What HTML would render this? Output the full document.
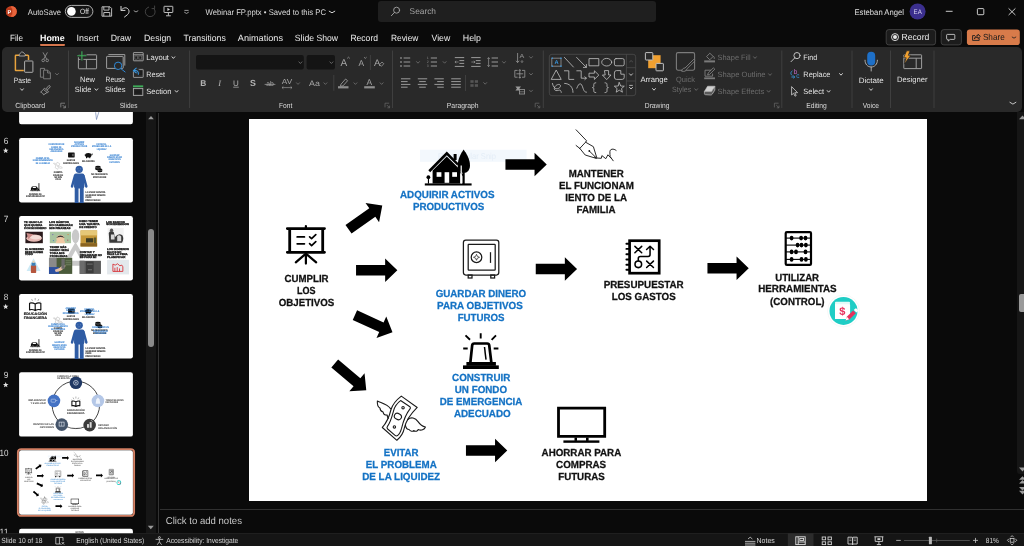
<!DOCTYPE html>
<html lang="en">
<head>
<meta charset="utf-8">
<title>Webinar FP.pptx - PowerPoint</title>
<style>
html,body{margin:0;padding:0;background:#0a0a0a;}
body{width:1024px;height:546px;overflow:hidden;position:relative;font-family:"Liberation Sans", sans-serif;}
.blk{position:absolute;}
#titlebar{left:0;top:0;width:1024px;height:47px;background:#0a0a0a;}
#search{left:378px;top:1px;width:278px;height:21px;background:#1f1f1f;border-radius:3px;}
#ribbon{left:1.5px;top:47px;width:1020px;height:64.5px;background:#292929;border-radius:5px;}
#panel{left:0;top:112px;width:158px;height:421px;background:#0a0a0a;}
#pscroll{left:146px;top:112px;width:10px;height:421px;background:#161616;}
#pthumb{left:148.3px;top:229px;width:5.4px;height:117.5px;background:#8a8a8a;border-radius:3px;}
#pdiv{left:158.3px;top:113px;width:1px;height:420px;background:#333;}
#work{left:159px;top:112px;width:865px;height:397px;background:#0a0a0a;}
#slide{left:249.4px;top:119.25px;width:677.6px;height:381.75px;background:#fff;}
#notesdiv{left:159.5px;top:509px;width:864.5px;height:1px;background:#303030;}
#statusbar{left:0;top:533px;width:1024px;height:13px;background:#151515;border-top:1px solid #1f1f1f;box-sizing:border-box;}
#vscroll{left:1016.7px;top:112px;width:8px;height:362px;background:#161616;border-radius:0 0 0 3px;}
#vthumb{left:1019px;top:293.5px;width:8px;height:18.5px;background:#9a9a9a;border-radius:2px;}
svg#ov{position:absolute;left:0;top:0;width:1024px;height:546px;font-family:"Liberation Sans", sans-serif;will-change:transform;}
svg text{white-space:pre;text-rendering:geometricPrecision;}
</style>
</head>
<body>
<div class="blk" id="titlebar"></div>
<div class="blk" id="search"></div>
<div class="blk" id="ribbon"></div>
<div class="blk" id="panel"></div>
<div class="blk" id="pscroll"></div>
<div class="blk" id="pthumb"></div>
<div class="blk" id="pdiv"></div>
<div class="blk" id="work"></div>
<div class="blk" id="vscroll"></div>
<div class="blk" id="vthumb"></div>
<div class="blk" id="slide"></div>
<div class="blk" id="notesdiv"></div>
<div class="blk" id="statusbar"></div>
<svg id="ov" width="1024" height="546" viewBox="0 0 1024 546">
<circle cx="11.3" cy="11.5" r="5.5" fill="#c8421f"/>
<path d="M11.3 6a5.5 5.5 0 0 1 0 11z" fill="#e8643c"/>
<rect x="6.3" y="8.3" width="6" height="6.4" fill="#b7391a" rx="0.8"/>
<text x="9.3" y="13.56" font-size="5.6" fill="#fff" text-anchor="middle" font-weight="700">P</text>
<text x="27.8" y="14.79" font-size="8.2" fill="#dcdcdc" textLength="33.2" lengthAdjust="spacingAndGlyphs">AutoSave</text>
<rect x="65.3" y="5.4" width="27.6" height="12" fill="#141414" stroke="#bdbdbd" stroke-width="0.9" rx="6"/>
<circle cx="71.4" cy="11.4" r="4.3" fill="#fff"/>
<text x="80" y="14.38" font-size="7.6" fill="#e4e4e4" textLength="8.8" lengthAdjust="spacingAndGlyphs">Off</text>
<g fill="none" stroke="#cfcfcf" stroke-width="0.9" stroke-linejoin="round"><path d="M102 6.8h8l1.6 1.6v7.8h-9.6z"/><path d="M103.8 6.9v3.2h5.2V6.9"/><path d="M103.8 16.1v-3.6h6v3.6"/></g>
<g fill="none" stroke="#d8d8d8" stroke-width="1" stroke-linecap="round" stroke-linejoin="round"><path d="M121 6.4v4h4"/><path d="M121.3 10.2c1.6-2.4 4.4-3.2 6.4-1.6c2 1.8 1.6 4.6-0.4 6.2l-2.8 2.2"/></g>
<path d="M134.1 10.85 l1.9 1.1 l1.9 -1.1" fill="none" stroke="#bdbdbd" stroke-width="0.8" stroke-linecap="round" stroke-linejoin="round"/>
<path d="M153.6 8.2a4.9 4.9 0 1 1 -4.6-1.2" fill="none" stroke="#4a4a4a" stroke-width="0.9"/><path d="M154.6 5.6v3h-3" fill="none" stroke="#4a4a4a" stroke-width="0.9"/>
<g fill="none" stroke="#d0d0d0" stroke-width="0.9"><rect x="164" y="6.3" width="8.8" height="6.2" rx="0.4"/><path d="M168.4 12.6v3M166 15.8h4.8"/></g><path d="M167.4 7.8l2.6 1.6l-2.6 1.6z" fill="#d0d0d0"/>
<line x1="184.4" y1="10.4" x2="188.6" y2="10.4" stroke="#bdbdbd" stroke-width="0.8" stroke-linecap="butt"/>
<path d="M184.6 12.35 l1.9 1.1 l1.9 -1.1" fill="none" stroke="#bdbdbd" stroke-width="0.8" stroke-linecap="round" stroke-linejoin="round"/>
<text x="205.5" y="14.79" font-size="8.2" fill="#dcdcdc" textLength="120.5" lengthAdjust="spacingAndGlyphs">Webinar FP.pptx • Saved to this PC</text>
<path d="M329.2 11.2 l2.8 1.6 l2.8 -1.6" fill="none" stroke="#d4d4d4" stroke-width="1.0" stroke-linecap="round" stroke-linejoin="round"/>
<g fill="none" stroke="#a8a8a8" stroke-width="0.9" stroke-linecap="round"><circle cx="396.6" cy="10.2" r="3"/><path d="M394.4 12.5l-3 3.2"/></g>
<text x="409.6" y="14.26" font-size="8.4" fill="#a2a2a2" textLength="26.4" lengthAdjust="spacingAndGlyphs">Search</text>
<text x="854.5" y="14.79" font-size="8.2" fill="#e0e0e0" textLength="49.5" lengthAdjust="spacingAndGlyphs">Esteban Angel</text>
<circle cx="917.6" cy="11.5" r="8" fill="#3b2f8e"/>
<text x="913.6" y="14" font-size="6.4" fill="#d9d4f0" textLength="8.2" lengthAdjust="spacingAndGlyphs">EA</text>
<line x1="945.8" y1="11.3" x2="952.6" y2="11.3" stroke="#e0e0e0" stroke-width="0.9" stroke-linecap="butt"/>
<rect x="977.4" y="8.6" width="6.4" height="6.1" fill="none" stroke="#e0e0e0" stroke-width="0.9" rx="0.8"/>
<path d="M1008.6 8.4l6.8 6.6M1015.4 8.4l-6.8 6.6" stroke="#e0e0e0" stroke-width="0.9" fill="none"/>
<text x="10" y="40.87" font-size="9" fill="#ececec" textLength="13.1" lengthAdjust="spacingAndGlyphs">File</text>
<text x="76.5" y="40.87" font-size="9" fill="#ececec" textLength="22.3" lengthAdjust="spacingAndGlyphs">Insert</text>
<text x="110.8" y="40.87" font-size="9" fill="#ececec" textLength="20.4" lengthAdjust="spacingAndGlyphs">Draw</text>
<text x="144" y="40.87" font-size="9" fill="#ececec" textLength="27.2" lengthAdjust="spacingAndGlyphs">Design</text>
<text x="183.6" y="40.87" font-size="9" fill="#ececec" textLength="42.2" lengthAdjust="spacingAndGlyphs">Transitions</text>
<text x="237.8" y="40.87" font-size="9" fill="#ececec" textLength="45.2" lengthAdjust="spacingAndGlyphs">Animations</text>
<text x="294.8" y="40.87" font-size="9" fill="#ececec" textLength="43.2" lengthAdjust="spacingAndGlyphs">Slide Show</text>
<text x="350.4" y="40.87" font-size="9" fill="#ececec" textLength="27.6" lengthAdjust="spacingAndGlyphs">Record</text>
<text x="391" y="40.87" font-size="9" fill="#ececec" textLength="27.4" lengthAdjust="spacingAndGlyphs">Review</text>
<text x="431.5" y="40.87" font-size="9" fill="#ececec" textLength="18.7" lengthAdjust="spacingAndGlyphs">View</text>
<text x="462.8" y="40.87" font-size="9" fill="#ececec" textLength="18.2" lengthAdjust="spacingAndGlyphs">Help</text>
<text x="40" y="40.87" font-size="9" fill="#ffffff" textLength="24.6" lengthAdjust="spacingAndGlyphs" font-weight="700">Home</text>
<rect x="40" y="43.9" width="25" height="2" fill="#d5764d" rx="0.8"/>
<rect x="886.2" y="29.6" width="49.4" height="15.3" fill="#1c1c1c" stroke="#4a4a4a" stroke-width="0.8" rx="2.6"/>
<circle cx="895" cy="37.1" r="3.5" fill="none" stroke="#e6e6e6" stroke-width="0.9"/>
<circle cx="895" cy="37.1" r="2" fill="#e6e6e6"/>
<text x="901.6" y="40.3" font-size="8.8" fill="#ececec" textLength="27.7" lengthAdjust="spacingAndGlyphs">Record</text>
<rect x="941.2" y="29.6" width="20.2" height="15.3" fill="#1c1c1c" stroke="#4a4a4a" stroke-width="0.8" rx="2.6"/>
<path d="M947.4 34.4h6.6a0.8 0.8 0 0 1 0.8 0.8v3.4a0.8 0.8 0 0 1 -0.8 0.8h-3.8l-2 1.7v-1.7h-0.8a0.8 0.8 0 0 1 -0.8-0.8v-3.4a0.8 0.8 0 0 1 0.8-0.8z" fill="none" stroke="#dcdcdc" stroke-width="0.8" stroke-linejoin="round"/>
<rect x="966.9" y="29.4" width="52.9" height="15.6" fill="#d87b4a" rx="2.8"/>
<g fill="none" stroke="#1d1d1d" stroke-width="0.9" stroke-linejoin="round" stroke-linecap="round"><path d="M974.6 35.6h-2v4.8h6.6v-1.8"/><path d="M974.6 38.4c0.4-1.8 1.6-2.8 3.4-2.8v-1.4l2.4 2.2l-2.4 2.2v-1.4c-1.4 0-2.6 0.3-3.4 1.2z"/></g>
<text x="982.9" y="40.3" font-size="8.8" fill="#1a1a1a" textLength="21.9" lengthAdjust="spacingAndGlyphs">Share</text>
<path d="M1012.2 37.05 l1.8 1.1 l1.8 -1.1" fill="none" stroke="#1d1d1d" stroke-width="0.8" stroke-linecap="round" stroke-linejoin="round"/>
<line x1="68.5" y1="50.5" x2="68.5" y2="108" stroke="#454545" stroke-width="0.8" stroke-linecap="butt"/>
<line x1="189.6" y1="50.5" x2="189.6" y2="108" stroke="#454545" stroke-width="0.8" stroke-linecap="butt"/>
<line x1="392.5" y1="50.5" x2="392.5" y2="108" stroke="#454545" stroke-width="0.8" stroke-linecap="butt"/>
<line x1="543.3" y1="50.5" x2="543.3" y2="108" stroke="#454545" stroke-width="0.8" stroke-linecap="butt"/>
<line x1="781.8" y1="50.5" x2="781.8" y2="108" stroke="#454545" stroke-width="0.8" stroke-linecap="butt"/>
<line x1="852" y1="50.5" x2="852" y2="108" stroke="#454545" stroke-width="0.8" stroke-linecap="butt"/>
<line x1="890.5" y1="50.5" x2="890.5" y2="108" stroke="#454545" stroke-width="0.8" stroke-linecap="butt"/>
<line x1="934" y1="50.5" x2="934" y2="108" stroke="#454545" stroke-width="0.8" stroke-linecap="butt"/>
<g fill="none" stroke-linejoin="round"><path d="M19.6 55.3H16a0.6 0.6 0 0 0 -0.6 0.6V70a0.6 0.6 0 0 0 0.6 0.6h7.8" stroke="#e8a33d" stroke-width="1.5"/><path d="M25 55.3h2.9a0.6 0.6 0 0 1 0.6 0.6v4.2" stroke="#e8a33d" stroke-width="1.5"/><path d="M19.2 56v-1.6l2.4-2.4h1.2l2.4 2.4V56z" stroke="#bdbdbd" stroke-width="0.8" fill="#292929"/><rect x="24.6" y="61" width="8.3" height="11.3" rx="0.6" stroke="#bdbdbd" stroke-width="0.9" fill="#292929"/></g>
<text x="13.8" y="82.59" font-size="7.7" fill="#e4e4e4" textLength="17.2" lengthAdjust="spacingAndGlyphs">Paste</text>
<path d="M20.6 88.8 l1.4 1.6 l1.4 -1.6" fill="none" stroke="#d4d4d4" stroke-width="1.0" stroke-linecap="round" stroke-linejoin="round"/>
<g fill="none" stroke="#9a9a9a" stroke-width="0.8"><path d="M43 52.4l3.6 6.6M47.4 52.4l-3.6 6.6"/><circle cx="43.2" cy="60.4" r="1.3"/><circle cx="47.2" cy="60.4" r="1.3"/></g>
<g fill="none" stroke="#8c8c8c" stroke-width="0.8" stroke-linejoin="round"><path d="M44.6 70v-1.6h-4.2v8.8h2.6"/><path d="M43.6 70.2h4.2l2.6 2.6v6h-6.8z"/><path d="M47.6 70.4v2.6h2.6"/></g>
<path d="M55.5 73.4 l1.5 1.6 l1.5 -1.6" fill="none" stroke="#6c6c6c" stroke-width="0.9" stroke-linecap="round" stroke-linejoin="round"/>
<g fill="none" stroke="#a8a8a8" stroke-width="0.8" stroke-linejoin="round"><path d="M46.4 88.4l2.6-3l1.4 1.2l-2.6 3z"/><path d="M44.4 88.2l4.2 3.4l-1 1.2l-4.2-3.4z"/><path d="M43.2 89.6l-2.6 2.6c1.6 0.4 2.4 1.2 3 2.6l3.6-2.4"/></g>
<text x="15.2" y="108.39" font-size="7.4" fill="#dadada" textLength="30" lengthAdjust="spacingAndGlyphs">Clipboard</text>
<path d="M65 103.2h-4.200v4.200M62.6 105l2.600 2.600M65.4 107.8v-2.200M65.4 107.8h-2.200" fill="none" stroke="#9a9a9a" stroke-width="0.700"/>
<g fill="none" stroke="#9e9e9e" stroke-width="1"><rect x="78.4" y="54.8" width="18.2" height="14" rx="0.5"/><path d="M78.4 59.4H96.6M86.4 59.4V68.8"/></g><path d="M81.9 51v9.6M77.1 55.8h9.6" stroke="#292929" stroke-width="3" fill="none"/><path d="M81.9 51.2v9.2M77.3 55.8h9.2" stroke="#3fae5a" stroke-width="1.1" fill="none"/>
<text x="80" y="81.59" font-size="7.7" fill="#e4e4e4" textLength="15" lengthAdjust="spacingAndGlyphs">New</text>
<text x="74.8" y="91.99" font-size="7.7" fill="#e4e4e4" textLength="16.6" lengthAdjust="spacingAndGlyphs">Slide</text>
<path d="M95 88.8 l1.4 1.6 l1.4 -1.6" fill="none" stroke="#d4d4d4" stroke-width="1.0" stroke-linecap="round" stroke-linejoin="round"/>
<g fill="none" stroke="#9e9e9e" stroke-width="1"><path d="M108.4 54.6h16.4v11"/><rect x="106.6" y="56.4" width="16.6" height="12" rx="0.5" fill="#292929"/></g><g fill="none" stroke="#2f8ad8" stroke-width="1"><circle cx="118.1" cy="65.8" r="3.7" fill="#292929"/><path d="M120.8 68.6l4.6 3.6"/></g>
<text x="105.6" y="81.59" font-size="7.7" fill="#e4e4e4" textLength="19.4" lengthAdjust="spacingAndGlyphs">Reuse</text>
<text x="105" y="91.99" font-size="7.7" fill="#e4e4e4" textLength="20.6" lengthAdjust="spacingAndGlyphs">Slides</text>
<g fill="none" stroke="#a8a8a8" stroke-width="0.9"><rect x="133.4" y="52.6" width="9.8" height="8.2" rx="0.4"/><path d="M133.4 54.8h9.8"/></g><rect x="134.9" y="56" width="2.7" height="3.1" fill="#1c1c1c" stroke="#8c8c8c" stroke-width="0.5"/><rect x="138.9" y="56" width="2.9" height="3.100" fill="#1c1c1c" stroke="#8c8c8c" stroke-width="0.500"/>
<text x="146.2" y="59.99" font-size="7.7" fill="#e4e4e4" textLength="22.8" lengthAdjust="spacingAndGlyphs">Layout</text>
<path d="M172 56.8 l1.4 1.6 l1.4 -1.6" fill="none" stroke="#d4d4d4" stroke-width="1.0" stroke-linecap="round" stroke-linejoin="round"/>
<g fill="none" stroke="#a0a0a0" stroke-width="0.9"><rect x="133.4" y="69.4" width="9.800" height="8" rx="0.400"/></g><rect x="138.6" y="71" width="3.600" height="4" fill="#1c1c1c"/><path d="M132.600 70.800l3-2.800v1.600c2.600 0 3.600 1.600 3.400 4.400" stroke="#292929" stroke-width="2.600" fill="none"/><path d="M136.200 68.200l-2.800 2.500l2.800 2.100M133.800 70.700c3.200-0.800 4.800 0.600 4.600 3.600" stroke="#3a96dd" stroke-width="1.100" fill="none" stroke-linejoin="round" stroke-linecap="round"/>
<text x="146.2" y="76.99" font-size="7.7" fill="#e4e4e4" textLength="18.8" lengthAdjust="spacingAndGlyphs">Reset</text>
<rect x="133" y="85.4" width="10.2" height="1.8" fill="#3fae5a"/>
<rect x="133.4" y="88.4" width="9.4" height="7" fill="none" stroke="#a8a8a8" stroke-width="0.9"/><rect x="134.800" y="90.200" width="6.600" height="3.600" fill="#1c1c1c"/>
<text x="146.2" y="93.69" font-size="7.7" fill="#e4e4e4" textLength="25.3" lengthAdjust="spacingAndGlyphs">Section</text>
<path d="M175.2 90.6 l1.4 1.6 l1.4 -1.6" fill="none" stroke="#d4d4d4" stroke-width="1.0" stroke-linecap="round" stroke-linejoin="round"/>
<text x="119.8" y="108.39" font-size="7.4" fill="#dadada" textLength="17.6" lengthAdjust="spacingAndGlyphs">Slides</text>
<rect x="196" y="55" width="107.8" height="14.5" fill="#141414" rx="2"/>
<rect x="306.6" y="55" width="28.4" height="14.5" fill="#141414" rx="2"/>
<path d="M298.9 61.9 l1.5 1.6 l1.5 -1.6" fill="none" stroke="#6c6c6c" stroke-width="0.9" stroke-linecap="round" stroke-linejoin="round"/>
<path d="M329.9 61.9 l1.5 1.6 l1.5 -1.6" fill="none" stroke="#6c6c6c" stroke-width="0.9" stroke-linecap="round" stroke-linejoin="round"/>
<text x="343.8" y="65.7" font-size="10" fill="#a6a6a6" text-anchor="middle">A</text>
<path d="M347.2 58.4l1.3-1.2l1.3 1.2" stroke="#a6a6a6" stroke-width="0.7" fill="none"/>
<text x="361.2" y="65.74" font-size="8.4" fill="#a6a6a6" text-anchor="middle">A</text>
<path d="M364 57.2l1.3 1.2l1.3-1.2" stroke="#a6a6a6" stroke-width="0.7" fill="none"/>
<line x1="370.4" y1="55" x2="370.4" y2="70" stroke="#454545" stroke-width="0.8" stroke-linecap="butt"/>
<text x="377.2" y="65.56" font-size="9.6" fill="#a6a6a6" text-anchor="middle">A</text>
<path d="M379.6 64.6l2.4-2.6l1.8 1.7l-2.4 2.6z" fill="#292929" stroke="#a6a6a6" stroke-width="0.7"/>
<text x="203.2" y="85.94" font-size="8.4" fill="#b4b4b4" text-anchor="middle" font-weight="700">B</text>
<text x="218.2" y="85.9" font-size="8.4" fill="#b4b4b4" font-style="italic" font-family="Liberation Serif, serif">I</text>
<text x="236" y="85.6" font-size="8" fill="#b4b4b4" text-anchor="middle">U</text>
<line x1="233.2" y1="87.2" x2="238.8" y2="87.2" stroke="#b4b4b4" stroke-width="0.7" stroke-linecap="butt"/>
<text x="253" y="86.08" font-size="8.8" fill="#b4b4b4" text-anchor="middle" font-weight="700">S</text>
<text x="270" y="85.98" font-size="6.8" fill="#a6a6a6" text-anchor="middle">ab</text>
<line x1="264.6" y1="84.4" x2="275.4" y2="84.4" stroke="#a6a6a6" stroke-width="0.7" stroke-linecap="butt"/>
<text x="281.8" y="84.19" font-size="7.4" fill="#a6a6a6" textLength="10.4" lengthAdjust="spacingAndGlyphs">AV</text>
<path d="M282 87.6h10M283.4 86.4l-1.4 1.2l1.4 1.2M290.6 86.4l1.4 1.2l-1.4 1.2" stroke="#a6a6a6" stroke-width="0.6" fill="none"/>
<path d="M296.5 82.8 l1.5 1.6 l1.5 -1.6" fill="none" stroke="#6c6c6c" stroke-width="0.9" stroke-linecap="round" stroke-linejoin="round"/>
<text x="309" y="86.2" font-size="8" fill="#a6a6a6" textLength="10.8" lengthAdjust="spacingAndGlyphs">Aa</text>
<path d="M323.9 82.8 l1.5 1.6 l1.5 -1.6" fill="none" stroke="#6c6c6c" stroke-width="0.9" stroke-linecap="round" stroke-linejoin="round"/>
<line x1="333.8" y1="75" x2="333.8" y2="90.8" stroke="#454545" stroke-width="0.8" stroke-linecap="butt"/>
<path d="M341 84.2l4.6-5.2l2 1.7l-4.6 5.2l-2.6 0.4z" fill="none" stroke="#a6a6a6" stroke-width="0.8" stroke-linejoin="round"/>
<rect x="338" y="86.2" width="10.5" height="2.2" fill="#8e8e8e"/>
<path d="M353.9 82.8 l1.5 1.6 l1.5 -1.6" fill="none" stroke="#6c6c6c" stroke-width="0.9" stroke-linecap="round" stroke-linejoin="round"/>
<text x="369.4" y="84.74" font-size="8.4" fill="#a6a6a6" text-anchor="middle">A</text>
<rect x="364.2" y="86.2" width="10.6" height="2.2" fill="#8e8e8e"/>
<path d="M380.1 82.8 l1.5 1.6 l1.5 -1.6" fill="none" stroke="#6c6c6c" stroke-width="0.9" stroke-linecap="round" stroke-linejoin="round"/>
<text x="279" y="108.39" font-size="7.4" fill="#dadada" textLength="13.3" lengthAdjust="spacingAndGlyphs">Font</text>
<path d="M389.2 103.2h-4.200v4.200M386.8 105l2.600 2.600M389.6 107.8v-2.200M389.6 107.8h-2.200" fill="none" stroke="#6a6a6a" stroke-width="0.700"/>
<rect x="400.2" y="57.3" width="1.6" height="1.4" fill="#9a9a9a"/>
<line x1="403.6" y1="58" x2="410.2" y2="58" stroke="#9a9a9a" stroke-width="1.0" stroke-linecap="butt"/>
<rect x="400.2" y="61.3" width="1.6" height="1.4" fill="#9a9a9a"/>
<line x1="403.6" y1="62" x2="410.2" y2="62" stroke="#9a9a9a" stroke-width="1.0" stroke-linecap="butt"/>
<rect x="400.2" y="65.3" width="1.6" height="1.4" fill="#9a9a9a"/>
<line x1="403.6" y1="66" x2="410.2" y2="66" stroke="#9a9a9a" stroke-width="1.0" stroke-linecap="butt"/>
<path d="M416.5 61.6 l1.5 1.6 l1.5 -1.6" fill="none" stroke="#6c6c6c" stroke-width="0.9" stroke-linecap="round" stroke-linejoin="round"/>
<text x="427" y="59.19" font-size="3.4" fill="#9a9a9a" textLength="1.6" lengthAdjust="spacingAndGlyphs">1</text>
<line x1="430.8" y1="58" x2="437" y2="58" stroke="#9a9a9a" stroke-width="1.0" stroke-linecap="butt"/>
<text x="427" y="63.19" font-size="3.4" fill="#9a9a9a" textLength="1.6" lengthAdjust="spacingAndGlyphs">2</text>
<line x1="430.8" y1="62" x2="437" y2="62" stroke="#9a9a9a" stroke-width="1.0" stroke-linecap="butt"/>
<text x="427" y="67.19" font-size="3.4" fill="#9a9a9a" textLength="1.6" lengthAdjust="spacingAndGlyphs">3</text>
<line x1="430.8" y1="66" x2="437" y2="66" stroke="#9a9a9a" stroke-width="1.0" stroke-linecap="butt"/>
<path d="M443.1 61.6 l1.5 1.6 l1.5 -1.6" fill="none" stroke="#6c6c6c" stroke-width="0.9" stroke-linecap="round" stroke-linejoin="round"/>
<line x1="454.8" y1="57.6" x2="464.2" y2="57.6" stroke="#9a9a9a" stroke-width="1" stroke-linecap="butt"/>
<line x1="454.8" y1="66.4" x2="464.2" y2="66.4" stroke="#9a9a9a" stroke-width="1" stroke-linecap="butt"/>
<line x1="459.4" y1="60.6" x2="464.2" y2="60.6" stroke="#9a9a9a" stroke-width="1" stroke-linecap="butt"/>
<line x1="459.4" y1="63.4" x2="464.2" y2="63.4" stroke="#9a9a9a" stroke-width="1" stroke-linecap="butt"/>
<line x1="471.2" y1="57.6" x2="480.6" y2="57.6" stroke="#9a9a9a" stroke-width="1" stroke-linecap="butt"/>
<line x1="471.2" y1="66.4" x2="480.6" y2="66.4" stroke="#9a9a9a" stroke-width="1" stroke-linecap="butt"/>
<line x1="475.8" y1="60.6" x2="480.6" y2="60.6" stroke="#9a9a9a" stroke-width="1" stroke-linecap="butt"/>
<line x1="475.8" y1="63.4" x2="480.6" y2="63.4" stroke="#9a9a9a" stroke-width="1" stroke-linecap="butt"/>
<path d="M458.6 62h-3.6M456.2 60.8l-1.3 1.2l1.3 1.2" stroke="#9a9a9a" stroke-width="0.7" fill="none"/>
<path d="M471.4 62h3.6M473.8 60.8l1.3 1.2l-1.3 1.2" stroke="#9a9a9a" stroke-width="0.7" fill="none"/>
<line x1="491.6" y1="58" x2="498" y2="58" stroke="#9a9a9a" stroke-width="1.0" stroke-linecap="butt"/>
<line x1="491.6" y1="62" x2="498" y2="62" stroke="#9a9a9a" stroke-width="1.0" stroke-linecap="butt"/>
<line x1="491.6" y1="66" x2="498" y2="66" stroke="#9a9a9a" stroke-width="1.0" stroke-linecap="butt"/>
<path d="M488.6 57.6v9M487.4 59l1.2-1.4l1.2 1.4M487.4 65.2l1.2 1.4l1.2-1.4" stroke="#9a9a9a" stroke-width="0.7" fill="none"/>
<path d="M502.5 61.6 l1.5 1.6 l1.5 -1.6" fill="none" stroke="#6c6c6c" stroke-width="0.9" stroke-linecap="round" stroke-linejoin="round"/>
<line x1="401" y1="78.8" x2="410.4" y2="78.8" stroke="#9a9a9a" stroke-width="1" stroke-linecap="butt"/>
<line x1="401" y1="81.6" x2="407.6" y2="81.6" stroke="#9a9a9a" stroke-width="1" stroke-linecap="butt"/>
<line x1="401" y1="84.4" x2="410.4" y2="84.4" stroke="#9a9a9a" stroke-width="1" stroke-linecap="butt"/>
<line x1="401" y1="87.2" x2="407.6" y2="87.2" stroke="#9a9a9a" stroke-width="1" stroke-linecap="butt"/>
<line x1="417.8" y1="78.8" x2="427.2" y2="78.8" stroke="#9a9a9a" stroke-width="1" stroke-linecap="butt"/>
<line x1="419.2" y1="81.6" x2="425.8" y2="81.6" stroke="#9a9a9a" stroke-width="1" stroke-linecap="butt"/>
<line x1="417.8" y1="84.4" x2="427.2" y2="84.4" stroke="#9a9a9a" stroke-width="1" stroke-linecap="butt"/>
<line x1="419.2" y1="87.2" x2="425.8" y2="87.2" stroke="#9a9a9a" stroke-width="1" stroke-linecap="butt"/>
<line x1="434.4" y1="78.8" x2="443.8" y2="78.8" stroke="#9a9a9a" stroke-width="1" stroke-linecap="butt"/>
<line x1="437.2" y1="81.6" x2="443.8" y2="81.6" stroke="#9a9a9a" stroke-width="1" stroke-linecap="butt"/>
<line x1="434.4" y1="84.4" x2="443.8" y2="84.4" stroke="#9a9a9a" stroke-width="1" stroke-linecap="butt"/>
<line x1="437.2" y1="87.2" x2="443.8" y2="87.2" stroke="#9a9a9a" stroke-width="1" stroke-linecap="butt"/>
<line x1="451.2" y1="78.8" x2="460.8" y2="78.8" stroke="#9a9a9a" stroke-width="1" stroke-linecap="butt"/>
<line x1="451.2" y1="81.6" x2="460.8" y2="81.6" stroke="#9a9a9a" stroke-width="1" stroke-linecap="butt"/>
<line x1="451.2" y1="84.4" x2="460.8" y2="84.4" stroke="#9a9a9a" stroke-width="1" stroke-linecap="butt"/>
<line x1="451.2" y1="87.2" x2="460.8" y2="87.2" stroke="#9a9a9a" stroke-width="1" stroke-linecap="butt"/>
<line x1="465.5" y1="75" x2="465.5" y2="91" stroke="#454545" stroke-width="0.8" stroke-linecap="butt"/>
<rect x="470.4" y="80.2" width="3.2" height="2.6" fill="#555"/>
<rect x="474.8" y="80.2" width="3.2" height="2.6" fill="#555"/>
<rect x="470.4" y="84.2" width="3.2" height="2.6" fill="#555"/>
<rect x="474.8" y="84.2" width="3.2" height="2.6" fill="#555"/>
<path d="M483.7 82.6 l1.5 1.6 l1.5 -1.6" fill="none" stroke="#6c6c6c" stroke-width="0.9" stroke-linecap="round" stroke-linejoin="round"/>
<path d="M517.6 53v9.4M516 60.8l1.6 1.8l1.6-1.8" stroke="#9a9a9a" stroke-width="0.8" fill="none"/>
<text x="519.6" y="58.1" font-size="6" fill="#9a9a9a" textLength="4.8" lengthAdjust="spacingAndGlyphs">A</text>
<path d="M522 60v2.4M520.8 61.2l1.2 1.4l1.2-1.4" stroke="#9a9a9a" stroke-width="0.6" fill="none"/>
<path d="M529.5 56.6 l1.5 1.6 l1.5 -1.6" fill="none" stroke="#6c6c6c" stroke-width="0.9" stroke-linecap="round" stroke-linejoin="round"/>
<path d="M517.6 70.4h-2.8v6.8h2.8M522 70.4h2.8v6.8h-2.8M516.4 73.8h6.8M519.8 69.6v8.6M518.8 70.8l1-1.2l1 1.2M518.8 77l1 1.2l1-1.2" stroke="#9a9a9a" stroke-width="0.8" fill="none"/>
<path d="M529.5 73.4 l1.5 1.6 l1.5 -1.6" fill="none" stroke="#6c6c6c" stroke-width="0.9" stroke-linecap="round" stroke-linejoin="round"/>
<path d="M515.4 86.6h5.6l-1.6 2l1.6 2h-5.6l1.6-2z" fill="#9a9a9a"/><rect x="519.4" y="89.6" width="5.2" height="4.4" fill="#292929" stroke="#9a9a9a" stroke-width="0.8"/><path d="M519.4 91.8h5.2" stroke="#9a9a9a" stroke-width="0.6"/>
<path d="M529.5 90.2 l1.5 1.6 l1.5 -1.6" fill="none" stroke="#6c6c6c" stroke-width="0.9" stroke-linecap="round" stroke-linejoin="round"/>
<text x="446.8" y="108.39" font-size="7.4" fill="#dadada" textLength="31.8" lengthAdjust="spacingAndGlyphs">Paragraph</text>
<path d="M539.4 103.2h-4.200v4.200M537 105l2.600 2.600M539.8 107.8v-2.200M539.8 107.8h-2.200" fill="none" stroke="#6a6a6a" stroke-width="0.700"/>
<rect x="549.3" y="54.3" width="86.4" height="41.4" fill="none" stroke="#4c4c4c" stroke-width="0.8" rx="2.6"/>
<line x1="626.4" y1="54.3" x2="626.4" y2="95.7" stroke="#4c4c4c" stroke-width="0.8" stroke-linecap="butt"/>
<line x1="626.4" y1="67.7" x2="635.7" y2="67.7" stroke="#4c4c4c" stroke-width="0.8" stroke-linecap="butt"/>
<line x1="626.4" y1="81" x2="635.7" y2="81" stroke="#4c4c4c" stroke-width="0.8" stroke-linecap="butt"/>
<path d="M629.4 62l1.7-1.4l1.7 1.4" stroke="#5c5c5c" stroke-width="0.8" fill="none"/>
<path d="M629.5 73.8 l1.5 1.6 l1.5 -1.6" fill="none" stroke="#d0d0d0" stroke-width="0.9" stroke-linecap="round" stroke-linejoin="round"/>
<line x1="629.2" y1="85.4" x2="632.8" y2="85.4" stroke="#d0d0d0" stroke-width="0.8" stroke-linecap="butt"/>
<path d="M629.5 87.4 l1.5 1.6 l1.5 -1.6" fill="none" stroke="#d0d0d0" stroke-width="0.9" stroke-linecap="round" stroke-linejoin="round"/>
<g fill="none" stroke="#c4c4c4" stroke-width="0.8" stroke-linejoin="round" stroke-linecap="round"><rect x="552.2" y="58.2" width="8.8" height="8" stroke="#9a9a9a"/><path d="M564.4 57.4l9 9.6"/><path d="M576.6 57.4l9.6 9.8M586.4 64.4v3h-3"/><rect x="589.4" y="58.6" width="9.4" height="7.2"/><ellipse cx="606.7" cy="62.2" rx="5" ry="3.8"/><rect x="614.4" y="58.6" width="9.8" height="7.2" rx="1.6"/><path d="M556.4 70.4l4.8 9h-9.6z"/><path d="M564.4 70.8h4.4v8.6h5"/><path d="M576.8 70.8h4.4v7.4h5M584.8 76.8l1.6 1.4l-1.6 1.4"/><path d="M589.4 73.2h5v-2.4l4.4 4.3l-4.4 4.3v-2.4h-5z"/><path d="M604.8 70.6h3.8v4.4h2.4l-4.3 4.6l-4.3-4.600h2.4z"/><path d="M614.4 72.6a2 2 0 0 1 2-2h4.400v3.600h3.400v3.200a2 2 0 0 1 -2 2h-5.800a2 2 0 0 1 -2-2z"/><path d="M552.4 83.400c0.800 3 2 5.400 4.400 5.400c2.400 0 4.400-2.200 3.400-3.800c-1-1.400-4.400-0.200-5.600 2.200c-1 2 0.400 3.800 2.600 3.400c1.400-0.200 2.200-0.800 3.200-0.200c0.800 0.600 0.600 1.400 0.800 2"/><path d="M564.600 83.400c4.800 0 8.400 3.600 8.400 9"/><path d="M576.800 88.200c2.400-6 4.400-6 6.200 0c1.200 3.600 2.200 4 3.600 4"/><path d="M595.800 82.800c-1.600 0-2 0.600-2 1.800v1.600c0 1-0.600 1.400-1.400 1.400c0.800 0 1.400 0.400 1.400 1.400v1.800c0 1.200 0.400 1.800 2 1.800"/><path d="M605 82.800c1.600 0 2 0.600 2 1.800v1.600c0 1 0.600 1.400 1.400 1.400c-0.800 0-1.400 0.400-1.400 1.400v1.800c0 1.200-0.400 1.800-2 1.800"/><path d="M619.300 82.600l1.400 3.400l3.600 0.200l-2.800 2.400l0.900 3.600l-3.100-2l-3.100 2l0.900-3.600l-2.800-2.400l3.600-0.200z"/></g>
<text x="554.5" y="64.26" font-size="5.6" fill="#3a96dd" textLength="4.1" lengthAdjust="spacingAndGlyphs" font-weight="700">A</text>
<rect x="551.5" y="57.5" width="1.4" height="1.4" fill="#3a96dd"/>
<rect x="560.3" y="57.5" width="1.4" height="1.4" fill="#3a96dd"/>
<rect x="551.5" y="65.5" width="1.4" height="1.4" fill="#3a96dd"/>
<rect x="560.3" y="65.5" width="1.4" height="1.4" fill="#3a96dd"/>
<rect x="648.2" y="55.2" width="12.4" height="13" fill="#f0a030"/>
<rect x="645.4" y="52.6" width="7.4" height="7.4" fill="#2b2b2b" stroke="#c0c0c0" stroke-width="1" rx="0.6"/>
<rect x="656" y="63.4" width="7.4" height="7.4" fill="#2b2b2b" stroke="#c0c0c0" stroke-width="1" rx="0.6"/>
<text x="640.4" y="81.99" font-size="7.7" fill="#e4e4e4" textLength="27.4" lengthAdjust="spacingAndGlyphs">Arrange</text>
<path d="M652.6 88.6 l1.4 1.6 l1.4 -1.6" fill="none" stroke="#d4d4d4" stroke-width="1.0" stroke-linecap="round" stroke-linejoin="round"/>
<rect x="676.4" y="52.6" width="18.2" height="17.600" rx="1.6" fill="none" stroke="#7c7c7c" stroke-width="1.1"/><path d="M681.600 71.200c0.400-2 1.600-3.200 3.400-3.200l8.600-8.600l1.400 1.400l-8.600 8.600c0 1.800-2.400 2.400-4.800 1.800z" fill="#292929" stroke="#8c8c8c" stroke-width="0.8" stroke-linejoin="round"/>
<text x="676" y="81.99" font-size="7.7" fill="#6c6c6c" textLength="19" lengthAdjust="spacingAndGlyphs">Quick</text>
<text x="672" y="91.99" font-size="7.7" fill="#6c6c6c" textLength="19.3" lengthAdjust="spacingAndGlyphs">Styles</text>
<path d="M694.8 88.8 l1.4 1.6 l1.4 -1.6" fill="none" stroke="#6c6c6c" stroke-width="0.9" stroke-linecap="round" stroke-linejoin="round"/>
<path d="M706.600 56.600l3.200-3.400l3.400 3.200l-3.400 3.400z" fill="none" stroke="#8a8a8a" stroke-width="0.8"/><path d="M713.400 56.200c1 1.200 1.200 2 0.600 2.800" stroke="#8a8a8a" stroke-width="0.8" fill="none"/>
<rect x="704.2" y="60.4" width="10.8" height="2" fill="#7a7a7a"/>
<text x="717.5" y="60.2" font-size="7.7" fill="#6c6c6c" textLength="33.1" lengthAdjust="spacingAndGlyphs">Shape Fill</text>
<path d="M753.6 56.8 l1.4 1.6 l1.4 -1.6" fill="none" stroke="#6c6c6c" stroke-width="0.9" stroke-linecap="round" stroke-linejoin="round"/>
<path d="M705 70.200h6M705 70.200v6h7.600v-2.600M707.600 75l0.600-2l5.200-5.200l1.400 1.400l-5.200 5.200z" fill="none" stroke="#8a8a8a" stroke-width="0.8" stroke-linejoin="round"/>
<rect x="704.2" y="77.4" width="10.8" height="1.8" fill="#7a7a7a"/>
<text x="717.5" y="77.09" font-size="7.7" fill="#6c6c6c" textLength="48.1" lengthAdjust="spacingAndGlyphs">Shape Outline</text>
<path d="M768.6 73.8 l1.4 1.6 l1.4 -1.6" fill="none" stroke="#6c6c6c" stroke-width="0.9" stroke-linecap="round" stroke-linejoin="round"/>
<path d="M704.400 91.400l3.200-5.200h7.200l-3.200 5.200z" fill="#d0d0d0" stroke="#d0d0d0" stroke-width="0.500" stroke-linejoin="round"/><path d="M704.400 91.400v2.200q0 1 1 1.100l5.200 0.300q1 0 1.600-0.800l2.600-4v-3.800l-3.200 5z" fill="#5a5a5a" stroke="#c0c0c0" stroke-width="0.700" stroke-linejoin="round"/>
<text x="717.5" y="93.89" font-size="7.7" fill="#6c6c6c" textLength="46.7" lengthAdjust="spacingAndGlyphs">Shape Effects</text>
<path d="M767.2 90.6 l1.4 1.6 l1.4 -1.6" fill="none" stroke="#6c6c6c" stroke-width="0.9" stroke-linecap="round" stroke-linejoin="round"/>
<text x="644.8" y="108.39" font-size="7.4" fill="#dadada" textLength="24.6" lengthAdjust="spacingAndGlyphs">Drawing</text>
<path d="M778.6 103.2h-4.200v4.200M776.2 105l2.600 2.600M779 107.8v-2.200M779 107.8h-2.200" fill="none" stroke="#6a6a6a" stroke-width="0.700"/>
<g fill="none" stroke="#d0d0d0" stroke-width="0.9" stroke-linecap="round"><circle cx="797" cy="55.600" r="3.100"/><path d="M794.800 57.900l-3.800 3.800"/></g>
<text x="803.3" y="59.99" font-size="7.7" fill="#e4e4e4" textLength="14.1" lengthAdjust="spacingAndGlyphs">Find</text>
<text x="793.8" y="73.65" font-size="7" fill="#c66cc8" textLength="3.6" lengthAdjust="spacingAndGlyphs">b</text>
<text x="796.2" y="78.45" font-size="7" fill="#3a96dd" textLength="3.2" lengthAdjust="spacingAndGlyphs">c</text>
<path d="M792.400 70.800c-2 1.200-2 3.600 0 4.800M791.400 77h3.200M793.400 75.700l1.400 1.300l-1.400 1.300" fill="none" stroke="#3a96dd" stroke-width="0.9"/>
<text x="803.3" y="76.99" font-size="7.7" fill="#e4e4e4" textLength="27.2" lengthAdjust="spacingAndGlyphs">Replace</text>
<path d="M839.6 73.6 l1.4 1.6 l1.4 -1.6" fill="none" stroke="#d4d4d4" stroke-width="1.0" stroke-linecap="round" stroke-linejoin="round"/>
<path d="M791.600 86.600v8.400l2-1.800l1.400 3l1.200-0.600l-1.400-2.900h2.800z" fill="none" stroke="#d0d0d0" stroke-width="0.8" stroke-linejoin="round"/>
<text x="803.3" y="93.89" font-size="7.7" fill="#e4e4e4" textLength="20.7" lengthAdjust="spacingAndGlyphs">Select</text>
<path d="M827.2 90.6 l1.4 1.6 l1.4 -1.6" fill="none" stroke="#d4d4d4" stroke-width="1.0" stroke-linecap="round" stroke-linejoin="round"/>
<text x="806.2" y="108.39" font-size="7.4" fill="#dadada" textLength="20.6" lengthAdjust="spacingAndGlyphs">Editing</text>
<rect x="867.2" y="51.8" width="8" height="13.8" fill="#1e70c8" rx="4"/>
<path d="M865 60.200c0 4 2.600 6.800 6.200 6.800s6.200-2.800 6.200-6.800M871.200 67v4" fill="none" stroke="#bdbdbd" stroke-width="0.9" stroke-linecap="round"/>
<text x="858.7" y="82.69" font-size="7.7" fill="#e4e4e4" textLength="24.9" lengthAdjust="spacingAndGlyphs">Dictate</text>
<path d="M869.6 88.8 l1.4 1.6 l1.4 -1.6" fill="none" stroke="#d4d4d4" stroke-width="1.0" stroke-linecap="round" stroke-linejoin="round"/>
<text x="862.7" y="108.39" font-size="7.4" fill="#dadada" textLength="16.2" lengthAdjust="spacingAndGlyphs">Voice</text>
<g fill="none" stroke="#9e9e9e" stroke-width="1"><rect x="903.800" y="54.800" width="17.800" height="13.800" rx="0.400"/><path d="M903.800 58.200h17.800M916.200 58.200v10.400"/></g>
<path d="M906.600 50.800h3.400l-1.700 4.500h2.500l-6.600 8.800l2-6.300h-2.600z" fill="#f0a030" stroke="#292929" stroke-width="0.700"/>
<text x="897" y="81.89" font-size="7.7" fill="#e4e4e4" textLength="30.6" lengthAdjust="spacingAndGlyphs">Designer</text>
<path d="M1009.9 102.3 l3 1.8 l3 -1.8" fill="none" stroke="#d8d8d8" stroke-width="0.9" stroke-linecap="round" stroke-linejoin="round"/>
<clipPath id="panelclip"><rect x="0" y="112" width="158" height="421.25"/></clipPath>
<g clip-path="url(#panelclip)">
<rect x="19.1" y="59.8" width="113.8" height="64.4" fill="#fff" rx="2.2"/>
<rect x="19.1" y="138" width="113.8" height="64.4" fill="#fff" rx="2.2"/>
<rect x="19.1" y="216" width="113.8" height="64.4" fill="#fff" rx="2.2"/>
<rect x="19.1" y="294" width="113.8" height="64.4" fill="#fff" rx="2.2"/>
<rect x="19.1" y="372.2" width="113.8" height="64.4" fill="#fff" rx="2.2"/>
<rect x="19.1" y="450.3" width="113.8" height="64.4" fill="#fff" rx="2.2"/>
<rect x="19.1" y="528.7" width="113.8" height="64.4" fill="#fff" rx="2.2"/>
<rect x="17.9" y="449.1" width="116.2" height="66.8" fill="none" stroke="#d27f63" stroke-width="1.9" rx="3.2"/>
<text x="3.8" y="144.05" font-size="9" fill="#d8d8d8" textLength="4.6" lengthAdjust="spacingAndGlyphs">6</text>
<text x="3.8" y="222.05" font-size="9" fill="#d8d8d8" textLength="4.6" lengthAdjust="spacingAndGlyphs">7</text>
<text x="3.8" y="300.05" font-size="9" fill="#d8d8d8" textLength="4.6" lengthAdjust="spacingAndGlyphs">8</text>
<text x="3.8" y="378.25" font-size="9" fill="#d8d8d8" textLength="4.6" lengthAdjust="spacingAndGlyphs">9</text>
<text x="-0.4" y="456.35" font-size="9" fill="#d8d8d8" textLength="9" lengthAdjust="spacingAndGlyphs">10</text>
<text x="-0.4" y="534.75" font-size="9" fill="#d8d8d8" textLength="9" lengthAdjust="spacingAndGlyphs">11</text>
<path d="M5.700 147.8l0.800 1.900l2 0.100l-1.600 1.300l0.550 2l-1.750-1.100l-1.750 1.100l0.550-2l-1.600-1.300l2-0.100z" fill="#e0e0e0"/>
<path d="M5.700 303.8l0.800 1.900l2 0.100l-1.600 1.300l0.550 2l-1.750-1.100l-1.750 1.100l0.550-2l-1.600-1.300l2-0.100z" fill="#e0e0e0"/>
<path d="M5.700 382l0.800 1.900l2 0.100l-1.600 1.300l0.550 2l-1.750-1.100l-1.750 1.100l0.550-2l-1.600-1.300l2-0.100z" fill="#e0e0e0"/>
<path d="M95.600 112.300l0.900 7.200l2.300-7.400" fill="none" stroke="#5c73a8" stroke-width="0.600"/>
<text x="75.6" y="532.51" font-size="2.6" fill="#333" textLength="8" lengthAdjust="spacingAndGlyphs" font-weight="700">MITOS</text>
<svg x="0" y="130" width="170" height="80" viewBox="0 0 1024 481.88"><g fill="#2f5ca4"><circle cx="477" cy="237" r="22"/><path d="M451 277L434 340M503 277L520 340" stroke="#2f5ca4" stroke-width="15" stroke-linecap="round" fill="none"/><rect x="446" y="262" width="62" height="90" rx="11"/><rect x="450" y="340" width="23" height="100"/><rect x="481" y="340" width="23" height="100"/></g><circle cx="469" cy="233" r="3" fill="#6f93cc"/><circle cx="485" cy="233" r="3" fill="#6f93cc"/><path d="M468 248q9-7 18 0" stroke="#6f93cc" stroke-width="2.400" fill="none"/><rect x="410" y="135" width="40" height="30" rx="4" fill="#111"/><rect x="436" y="146" width="16" height="9" rx="2" fill="#111" stroke="#fff" stroke-width="2"/><ellipse cx="532" cy="152" rx="19" ry="14" fill="#111"/><rect x="518" y="160" width="6" height="10" fill="#111"/><rect x="538" y="160" width="6" height="10" fill="#111"/><path d="M548 146l9-6v12z" fill="#111"/><rect x="510" y="148" width="6" height="6" fill="#111"/><g fill="#111"><ellipse cx="590" cy="222" rx="16" ry="7"/><rect x="574" y="222" width="32" height="14"/><ellipse cx="590" cy="236" rx="16" ry="7"/><ellipse cx="602" cy="238" rx="14" ry="6"/><rect x="588" y="238" width="28" height="10"/><ellipse cx="602" cy="248" rx="14" ry="6"/></g><path d="M575 226q15 8 31 0M589 242q13 7 27 0" stroke="#fff" stroke-width="1.6" fill="none"/><g fill="#111"><path d="M186 352q4-12 14-13h16q8 1 12 13l8 2v10h-50z"/><rect x="232" y="320" width="5" height="44"/><rect x="182" y="364" width="60" height="4"/></g><circle cx="198" cy="364" r="5" fill="#111" stroke="#fff" stroke-width="1.600"/><circle cx="224" cy="364" r="5" fill="#111" stroke="#fff" stroke-width="1.600"/><path d="M196 349l4-7h14l4 7z" fill="#fff"/><g transform="translate(348 216)" fill="none" stroke="#9a9a9a" stroke-width="2"><path d="M-4-22l16 9l-12 34l-16-10z"/><path d="M-10-4q-12-4-16-12q10-2 16 6M10 6q10-6 18 6q-10 6-20 0"/><circle cx="0" cy="0" r="4"/></g><text stroke="#222" stroke-width="0.5" x="402" y="188.33" font-size="15.68" fill="#222" textLength="50" lengthAdjust="spacingAndGlyphs" font-weight="700">GASTOS</text><text stroke="#222" stroke-width="0.5" x="379.5" y="202.33" font-size="15.68" fill="#222" textLength="95" lengthAdjust="spacingAndGlyphs" font-weight="700">CONTROLADOS</text><text stroke="#222" stroke-width="0.5" x="494" y="194.33" font-size="15.68" fill="#222" textLength="76" lengthAdjust="spacingAndGlyphs" font-weight="700">NO AHORRA</text><text stroke="#222" stroke-width="0.5" x="550" y="271.33" font-size="15.68" fill="#222" textLength="100" lengthAdjust="spacingAndGlyphs" font-weight="700">NO SUFICIENTE</text><text stroke="#222" stroke-width="0.5" x="560" y="286.33" font-size="15.68" fill="#222" textLength="80" lengthAdjust="spacingAndGlyphs" font-weight="700">PROTECCION</text><text stroke="#222" stroke-width="0.5" x="324" y="261.33" font-size="15.68" fill="#222" textLength="52" lengthAdjust="spacingAndGlyphs" font-weight="700">COMPRA</text><text stroke="#222" stroke-width="0.5" x="319" y="275.33" font-size="15.68" fill="#222" textLength="62" lengthAdjust="spacingAndGlyphs" font-weight="700">COSAS QUE</text><text stroke="#222" stroke-width="0.5" x="328" y="289.33" font-size="15.68" fill="#222" textLength="44" lengthAdjust="spacingAndGlyphs" font-weight="700">NO SON</text><text stroke="#222" stroke-width="0.5" x="333" y="303.33" font-size="15.68" fill="#222" textLength="34" lengthAdjust="spacingAndGlyphs" font-weight="700">UTILES</text><text stroke="#222" stroke-width="0.5" x="175" y="390.33" font-size="15.68" fill="#222" textLength="76" lengthAdjust="spacingAndGlyphs" font-weight="700">DEPENDE DE</text><text stroke="#222" stroke-width="0.5" x="157" y="406.33" font-size="15.68" fill="#222" textLength="112" lengthAdjust="spacingAndGlyphs" font-weight="700">EXPERIENCIA PR</text><text stroke="#222" stroke-width="0.5" x="515" y="378.33" font-size="15.68" fill="#222" textLength="120" lengthAdjust="spacingAndGlyphs" font-weight="700">LO PEOR CONTRA</text><text stroke="#222" stroke-width="0.5" x="515" y="394.93" font-size="15.68" fill="#222" textLength="120" lengthAdjust="spacingAndGlyphs" font-weight="700">GENERAR DINERO</text><text stroke="#222" stroke-width="0.5" x="515" y="411.53" font-size="15.68" fill="#222" textLength="36" lengthAdjust="spacingAndGlyphs" font-weight="700">PERO</text><text stroke="#222" stroke-width="0.5" x="515" y="428.13" font-size="15.68" fill="#222" textLength="90" lengthAdjust="spacingAndGlyphs" font-weight="700">PRESTA MUCHO</text><text stroke="#1f72cc" stroke-width="0.5" x="292.5" y="92.33" font-size="15.68" fill="#1f72cc" textLength="95" lengthAdjust="spacingAndGlyphs" font-weight="700" opacity="0.95">CONSTRUIR UN</text><text stroke="#1f72cc" stroke-width="0.5" x="309" y="106.33" font-size="15.68" fill="#1f72cc" textLength="62" lengthAdjust="spacingAndGlyphs" font-weight="700" opacity="0.95">FONDO DE</text><text stroke="#1f72cc" stroke-width="0.5" x="298" y="120.33" font-size="15.68" fill="#1f72cc" textLength="84" lengthAdjust="spacingAndGlyphs" font-weight="700" opacity="0.95">EMERGENCIA</text><text stroke="#1f72cc" stroke-width="0.5" x="304" y="135.33" font-size="15.68" fill="#1f72cc" textLength="72" lengthAdjust="spacingAndGlyphs" font-weight="700" opacity="0.95">ADECUADO</text><text stroke="#1f72cc" stroke-width="0.5" x="446" y="77.33" font-size="15.68" fill="#1f72cc" textLength="62" lengthAdjust="spacingAndGlyphs" font-weight="700" opacity="0.95">ADQUIRIR</text><text stroke="#1f72cc" stroke-width="0.5" x="449" y="91.33" font-size="15.68" fill="#1f72cc" textLength="56" lengthAdjust="spacingAndGlyphs" font-weight="700" opacity="0.95">ACTIVOS</text><text stroke="#1f72cc" stroke-width="0.5" x="429.5" y="105.33" font-size="15.68" fill="#1f72cc" textLength="95" lengthAdjust="spacingAndGlyphs" font-weight="700" opacity="0.95">PRODUCTIVOS</text><text stroke="#1f72cc" stroke-width="0.5" x="581" y="89.33" font-size="15.68" fill="#1f72cc" textLength="62" lengthAdjust="spacingAndGlyphs" font-weight="700" opacity="0.95">EVITAR EL</text><text stroke="#1f72cc" stroke-width="0.5" x="554" y="104.33" font-size="15.68" fill="#1f72cc" textLength="116" lengthAdjust="spacingAndGlyphs" font-weight="700" opacity="0.95">PROBLEMA DE LA</text><text stroke="#1f72cc" stroke-width="0.5" x="583" y="118.33" font-size="15.68" fill="#1f72cc" textLength="58" lengthAdjust="spacingAndGlyphs" font-weight="700" opacity="0.95">LIQUIDEZ</text><text stroke="#1f72cc" stroke-width="0.5" x="661" y="155.33" font-size="15.68" fill="#1f72cc" textLength="58" lengthAdjust="spacingAndGlyphs" font-weight="700" opacity="0.95">GUARDAR</text><text stroke="#1f72cc" stroke-width="0.5" x="645" y="169.33" font-size="15.68" fill="#1f72cc" textLength="90" lengthAdjust="spacingAndGlyphs" font-weight="700" opacity="0.95">DINERO PARA</text><text stroke="#1f72cc" stroke-width="0.5" x="654" y="183.33" font-size="15.68" fill="#1f72cc" textLength="72" lengthAdjust="spacingAndGlyphs" font-weight="700" opacity="0.95">OBJETIVOS</text><text stroke="#1f72cc" stroke-width="0.5" x="660" y="197.33" font-size="15.68" fill="#1f72cc" textLength="60" lengthAdjust="spacingAndGlyphs" font-weight="700" opacity="0.95">FUTUROS</text><text stroke="#1f72cc" stroke-width="0.5" x="215" y="173.33" font-size="15.68" fill="#1f72cc" textLength="86" lengthAdjust="spacingAndGlyphs" font-weight="700" opacity="0.95">CUMPLIR EL</text><text stroke="#1f72cc" stroke-width="0.5" x="198" y="188.33" font-size="15.68" fill="#1f72cc" textLength="120" lengthAdjust="spacingAndGlyphs" font-weight="700" opacity="0.95">FUNCIONAMIENTO</text><text stroke="#1f72cc" stroke-width="0.5" x="215" y="202.33" font-size="15.68" fill="#1f72cc" textLength="86" lengthAdjust="spacingAndGlyphs" font-weight="700" opacity="0.95">DE LA FAMILIA</text></svg>
<svg x="0" y="286" width="170" height="80" viewBox="0 0 1024 481.88"><g fill="#2f5ca4"><circle cx="477" cy="237" r="22"/><path d="M451 277L434 340M503 277L520 340" stroke="#2f5ca4" stroke-width="15" stroke-linecap="round" fill="none"/><rect x="446" y="262" width="62" height="90" rx="11"/><rect x="450" y="340" width="23" height="100"/><rect x="481" y="340" width="23" height="100"/></g><circle cx="469" cy="233" r="3" fill="#6f93cc"/><circle cx="485" cy="233" r="3" fill="#6f93cc"/><path d="M468 248q9-7 18 0" stroke="#6f93cc" stroke-width="2.400" fill="none"/><rect x="410" y="135" width="40" height="30" rx="4" fill="#111"/><rect x="436" y="146" width="16" height="9" rx="2" fill="#111" stroke="#fff" stroke-width="2"/><ellipse cx="532" cy="152" rx="19" ry="14" fill="#111"/><rect x="518" y="160" width="6" height="10" fill="#111"/><rect x="538" y="160" width="6" height="10" fill="#111"/><path d="M548 146l9-6v12z" fill="#111"/><rect x="510" y="148" width="6" height="6" fill="#111"/><g fill="#111"><ellipse cx="590" cy="222" rx="16" ry="7"/><rect x="574" y="222" width="32" height="14"/><ellipse cx="590" cy="236" rx="16" ry="7"/><ellipse cx="602" cy="238" rx="14" ry="6"/><rect x="588" y="238" width="28" height="10"/><ellipse cx="602" cy="248" rx="14" ry="6"/></g><path d="M575 226q15 8 31 0M589 242q13 7 27 0" stroke="#fff" stroke-width="1.6" fill="none"/><g fill="#111"><path d="M186 352q4-12 14-13h16q8 1 12 13l8 2v10h-50z"/><rect x="232" y="320" width="5" height="44"/><rect x="182" y="364" width="60" height="4"/></g><circle cx="198" cy="364" r="5" fill="#111" stroke="#fff" stroke-width="1.600"/><circle cx="224" cy="364" r="5" fill="#111" stroke="#fff" stroke-width="1.600"/><path d="M196 349l4-7h14l4 7z" fill="#fff"/><text stroke="#222" stroke-width="0.5" x="402" y="188.33" font-size="15.68" fill="#222" textLength="50" lengthAdjust="spacingAndGlyphs" font-weight="700">GASTOS</text><text stroke="#222" stroke-width="0.5" x="379.5" y="202.33" font-size="15.68" fill="#222" textLength="95" lengthAdjust="spacingAndGlyphs" font-weight="700">CONTROLADOS</text><text stroke="#222" stroke-width="0.5" x="494" y="194.33" font-size="15.68" fill="#222" textLength="76" lengthAdjust="spacingAndGlyphs" font-weight="700">NO AHORRA</text><text stroke="#222" stroke-width="0.5" x="550" y="271.33" font-size="15.68" fill="#222" textLength="100" lengthAdjust="spacingAndGlyphs" font-weight="700">NO SUFICIENTE</text><text stroke="#222" stroke-width="0.5" x="560" y="286.33" font-size="15.68" fill="#222" textLength="80" lengthAdjust="spacingAndGlyphs" font-weight="700">PROTECCION</text><text stroke="#222" stroke-width="0.5" x="324" y="261.33" font-size="15.68" fill="#222" textLength="52" lengthAdjust="spacingAndGlyphs" font-weight="700">COMPRA</text><text stroke="#222" stroke-width="0.5" x="319" y="275.33" font-size="15.68" fill="#222" textLength="62" lengthAdjust="spacingAndGlyphs" font-weight="700">COSAS QUE</text><text stroke="#222" stroke-width="0.5" x="328" y="289.33" font-size="15.68" fill="#222" textLength="44" lengthAdjust="spacingAndGlyphs" font-weight="700">NO SON</text><text stroke="#222" stroke-width="0.5" x="333" y="303.33" font-size="15.68" fill="#222" textLength="34" lengthAdjust="spacingAndGlyphs" font-weight="700">UTILES</text><text stroke="#222" stroke-width="0.5" x="175" y="390.33" font-size="15.68" fill="#222" textLength="76" lengthAdjust="spacingAndGlyphs" font-weight="700">DEPENDE DE</text><text stroke="#222" stroke-width="0.5" x="157" y="406.33" font-size="15.68" fill="#222" textLength="112" lengthAdjust="spacingAndGlyphs" font-weight="700">EXPERIENCIA PR</text><text stroke="#222" stroke-width="0.5" x="515" y="378.33" font-size="15.68" fill="#222" textLength="120" lengthAdjust="spacingAndGlyphs" font-weight="700">LO PEOR CONTRA</text><text stroke="#222" stroke-width="0.5" x="515" y="394.93" font-size="15.68" fill="#222" textLength="120" lengthAdjust="spacingAndGlyphs" font-weight="700">GENERAR DINERO</text><text stroke="#222" stroke-width="0.5" x="515" y="411.53" font-size="15.68" fill="#222" textLength="36" lengthAdjust="spacingAndGlyphs" font-weight="700">PERO</text><text stroke="#222" stroke-width="0.5" x="515" y="428.13" font-size="15.68" fill="#222" textLength="90" lengthAdjust="spacingAndGlyphs" font-weight="700">PRESTA MUCHO</text><g fill="none" stroke="#111" stroke-width="7" stroke-linejoin="round"><path d="M212 108q-18-10-34-4v40q16-6 34 4q18-10 34-4v-40q-16-6-34 4zM212 108v40"/></g><path d="M212 72v14M190 78l6 12M234 78l-6 12M180 96l8 4M244 96l-8 4" stroke="#333" stroke-width="2.400" fill="none"/><text stroke="#222" stroke-width="1" x="143" y="177.24" font-size="21.28" fill="#222" textLength="140" lengthAdjust="spacingAndGlyphs" font-weight="700">EDUCACIÓN</text><text stroke="#222" stroke-width="1" x="143" y="201.24" font-size="21.28" fill="#222" textLength="140" lengthAdjust="spacingAndGlyphs" font-weight="700">FINANCIERA</text><text stroke="#1f72cc" stroke-width="0.5" x="394" y="138.33" font-size="15.68" fill="#1f72cc" textLength="62" lengthAdjust="spacingAndGlyphs" font-weight="700" opacity="0.95">ADQUIRIR</text><text stroke="#1f72cc" stroke-width="0.5" x="397" y="152.33" font-size="15.68" fill="#1f72cc" textLength="56" lengthAdjust="spacingAndGlyphs" font-weight="700" opacity="0.95">ACTIVOS</text><text stroke="#1f72cc" stroke-width="0.5" x="377.5" y="166.33" font-size="15.68" fill="#1f72cc" textLength="95" lengthAdjust="spacingAndGlyphs" font-weight="700" opacity="0.95">PRODUCTIVOS</text><text stroke="#1f72cc" stroke-width="0.5" x="509" y="145.33" font-size="15.68" fill="#1f72cc" textLength="62" lengthAdjust="spacingAndGlyphs" font-weight="700" opacity="0.95">EVITAR EL</text><text stroke="#1f72cc" stroke-width="0.5" x="482" y="159.33" font-size="15.68" fill="#1f72cc" textLength="116" lengthAdjust="spacingAndGlyphs" font-weight="700" opacity="0.95">PROBLEMA DE LA</text><text stroke="#1f72cc" stroke-width="0.5" x="511" y="173.33" font-size="15.68" fill="#1f72cc" textLength="58" lengthAdjust="spacingAndGlyphs" font-weight="700" opacity="0.95">LIQUIDEZ</text><text stroke="#1f72cc" stroke-width="0.5" x="307" y="233.33" font-size="15.68" fill="#1f72cc" textLength="86" lengthAdjust="spacingAndGlyphs" font-weight="700" opacity="0.95">CUMPLIR EL</text><text stroke="#1f72cc" stroke-width="0.5" x="290" y="248.33" font-size="15.68" fill="#1f72cc" textLength="120" lengthAdjust="spacingAndGlyphs" font-weight="700" opacity="0.95">FUNCIONAMIENTO</text><text stroke="#1f72cc" stroke-width="0.5" x="307" y="262.33" font-size="15.68" fill="#1f72cc" textLength="86" lengthAdjust="spacingAndGlyphs" font-weight="700" opacity="0.95">DE LA FAMILIA</text><text stroke="#1f72cc" stroke-width="0.5" x="555" y="250.33" font-size="15.68" fill="#1f72cc" textLength="100" lengthAdjust="spacingAndGlyphs" font-weight="700" opacity="0.95">CONSTRUIR UN</text><text stroke="#1f72cc" stroke-width="0.5" x="560" y="277.33" font-size="15.68" fill="#1f72cc" textLength="90" lengthAdjust="spacingAndGlyphs" font-weight="700" opacity="0.95">EMERGENCIA</text><text stroke="#1f72cc" stroke-width="0.5" x="569" y="291.33" font-size="15.68" fill="#1f72cc" textLength="72" lengthAdjust="spacingAndGlyphs" font-weight="700" opacity="0.95">ADECUADO</text><text stroke="#1f72cc" stroke-width="0.5" x="329" y="345.33" font-size="15.68" fill="#1f72cc" textLength="58" lengthAdjust="spacingAndGlyphs" font-weight="700" opacity="0.95">GUARDAR</text><text stroke="#1f72cc" stroke-width="0.5" x="313" y="359.33" font-size="15.68" fill="#1f72cc" textLength="90" lengthAdjust="spacingAndGlyphs" font-weight="700" opacity="0.95">DINERO PARA</text><text stroke="#1f72cc" stroke-width="0.5" x="322" y="373.33" font-size="15.68" fill="#1f72cc" textLength="72" lengthAdjust="spacingAndGlyphs" font-weight="700" opacity="0.95">OBJETIVOS</text><text stroke="#1f72cc" stroke-width="0.5" x="328" y="388.33" font-size="15.68" fill="#1f72cc" textLength="60" lengthAdjust="spacingAndGlyphs" font-weight="700" opacity="0.95">FUTUROS</text><g transform="translate(348 208)" fill="none" stroke="#8a8a8a" stroke-width="2"><path d="M-4-22l16 9l-12 34l-16-10z"/><path d="M-10-4q-12-4-16-12q10-2 16 6M10 6q10-6 18 6q-10 6-20 0"/><circle cx="0" cy="0" r="4"/></g></svg>
<svg x="0" y="208" width="170" height="80" viewBox="0 0 1024 481.88"><g fill="#c9c9c9"><ellipse cx="455" cy="170" rx="22" ry="42"/><path d="M455 205l-55 95h30l25-45l25 45h30z"/><rect x="405" y="318" width="100" height="30"/></g><text stroke="#1c1c1c" stroke-width="1.8" x="145" y="90.52" font-size="16.24" fill="#1c1c1c" textLength="110" lengthAdjust="spacingAndGlyphs" font-weight="700">TE HAGO LO</text><text stroke="#1c1c1c" stroke-width="1.8" x="145" y="107.32" font-size="16.24" fill="#1c1c1c" textLength="110" lengthAdjust="spacingAndGlyphs" font-weight="700">QUE QUIERA</text><text stroke="#1c1c1c" stroke-width="1.8" x="145" y="124.12" font-size="16.24" fill="#1c1c1c" textLength="135" lengthAdjust="spacingAndGlyphs" font-weight="700">CON MI DINERO</text><text stroke="#1c1c1c" stroke-width="1.8" x="297" y="90.52" font-size="16.24" fill="#1c1c1c" textLength="118" lengthAdjust="spacingAndGlyphs" font-weight="700">LOS HÁBITOS</text><text stroke="#1c1c1c" stroke-width="1.8" x="297" y="107.32" font-size="16.24" fill="#1c1c1c" textLength="140" lengthAdjust="spacingAndGlyphs" font-weight="700">NO CAMBIARÁN</text><text stroke="#1c1c1c" stroke-width="1.8" x="297" y="124.12" font-size="16.24" fill="#1c1c1c" textLength="128" lengthAdjust="spacingAndGlyphs" font-weight="700">MIS FINANZAS</text><text stroke="#1c1c1c" stroke-width="1.8" x="478" y="84.52" font-size="16.24" fill="#1c1c1c" textLength="112" lengthAdjust="spacingAndGlyphs" font-weight="700">DEBO TENER</text><text stroke="#1c1c1c" stroke-width="1.8" x="478" y="101.32" font-size="16.24" fill="#1c1c1c" textLength="122" lengthAdjust="spacingAndGlyphs" font-weight="700">UNA TARJETA</text><text stroke="#1c1c1c" stroke-width="1.8" x="478" y="118.12" font-size="16.24" fill="#1c1c1c" textLength="104" lengthAdjust="spacingAndGlyphs" font-weight="700">DE CRÉDITO</text><text stroke="#1c1c1c" stroke-width="1.8" x="640" y="87.52" font-size="16.24" fill="#1c1c1c" textLength="112" lengthAdjust="spacingAndGlyphs" font-weight="700">LOS BANCOS</text><text stroke="#1c1c1c" stroke-width="1.8" x="640" y="104.32" font-size="16.24" fill="#1c1c1c" textLength="137" lengthAdjust="spacingAndGlyphs" font-weight="700">SON ENEMIGOS</text><text stroke="#1c1c1c" stroke-width="1.8" x="150" y="251.52" font-size="16.24" fill="#1c1c1c" textLength="115" lengthAdjust="spacingAndGlyphs" font-weight="700">EL GOBIERNO</text><text stroke="#1c1c1c" stroke-width="1.8" x="150" y="268.32" font-size="16.24" fill="#1c1c1c" textLength="110" lengthAdjust="spacingAndGlyphs" font-weight="700">DEBE DARME</text><text stroke="#1c1c1c" stroke-width="1.8" x="150" y="285.12" font-size="16.24" fill="#1c1c1c" textLength="48" lengthAdjust="spacingAndGlyphs" font-weight="700">TODO</text><text stroke="#1c1c1c" stroke-width="1.8" x="300" y="243.52" font-size="16.24" fill="#1c1c1c" textLength="100" lengthAdjust="spacingAndGlyphs" font-weight="700">TENER MÁS</text><text stroke="#1c1c1c" stroke-width="1.8" x="300" y="260.32" font-size="16.24" fill="#1c1c1c" textLength="115" lengthAdjust="spacingAndGlyphs" font-weight="700">DINERO SERÁ</text><text stroke="#1c1c1c" stroke-width="1.8" x="300" y="277.12" font-size="16.24" fill="#1c1c1c" textLength="88" lengthAdjust="spacingAndGlyphs" font-weight="700">TODA MIS</text><text stroke="#1c1c1c" stroke-width="1.8" x="300" y="293.92" font-size="16.24" fill="#1c1c1c" textLength="106" lengthAdjust="spacingAndGlyphs" font-weight="700">PROBLEMAS</text><text stroke="#1c1c1c" stroke-width="1.8" x="480" y="269.52" font-size="16.24" fill="#1c1c1c" textLength="90" lengthAdjust="spacingAndGlyphs" font-weight="700">CONTAR Y</text><text stroke="#1c1c1c" stroke-width="1.8" x="480" y="286.32" font-size="16.24" fill="#1c1c1c" textLength="135" lengthAdjust="spacingAndGlyphs" font-weight="700">ORGANIZAR NO</text><text stroke="#1c1c1c" stroke-width="1.8" x="480" y="303.12" font-size="16.24" fill="#1c1c1c" textLength="100" lengthAdjust="spacingAndGlyphs" font-weight="700">ES PARA MI</text><text stroke="#1c1c1c" stroke-width="1.8" x="645" y="251.52" font-size="16.24" fill="#1c1c1c" textLength="132" lengthAdjust="spacingAndGlyphs" font-weight="700">LOS INGRESOS</text><text stroke="#1c1c1c" stroke-width="1.8" x="645" y="268.32" font-size="16.24" fill="#1c1c1c" textLength="86" lengthAdjust="spacingAndGlyphs" font-weight="700">BAJOS NO</text><text stroke="#1c1c1c" stroke-width="1.8" x="645" y="285.12" font-size="16.24" fill="#1c1c1c" textLength="124" lengthAdjust="spacingAndGlyphs" font-weight="700">VALE LA PENA</text><text stroke="#1c1c1c" stroke-width="1.8" x="645" y="301.92" font-size="16.24" fill="#1c1c1c" textLength="110" lengthAdjust="spacingAndGlyphs" font-weight="700">PLANIFICAR</text><rect x="153" y="143" width="105" height="69" fill="#2a1a1c"/><ellipse cx="205" cy="182" rx="46" ry="22" fill="#e7b9b4"/><ellipse cx="215" cy="176" rx="34" ry="14" fill="#f3dcd6"/><path d="M160 150l40 8l-30 30z" fill="#c98a86"/><rect x="300" y="143" width="128" height="69" fill="#a9c4a0"/><circle cx="364" cy="186" r="24" fill="#f0c9a4"/><path d="M338 180q26-30 52 0q-26-12-52 0z" fill="#3a3a3a"/><rect x="336" y="200" width="56" height="12" fill="#f0c9a4"/><circle cx="318" cy="160" r="4" fill="#7a6ab0"/><circle cx="410" cy="160" r="4" fill="#d08a4a"/><circle cx="322" cy="196" r="4" fill="#5a8ab0"/><circle cx="408" cy="194" r="4" fill="#b05a6a"/><rect x="485" y="135" width="100" height="97" fill="#c79a3c"/><rect x="485" y="135" width="100" height="30" fill="#e6c878"/><rect x="518" y="182" width="44" height="26" fill="#3c3a22"/><rect x="485" y="212" width="100" height="20" fill="#8a6422"/><rect x="566" y="178" width="14" height="34" fill="#5c5a2c"/><rect x="648" y="120" width="97" height="95" fill="#f2f2f2"/><path d="M655 150q10-20 30-6l8 30q20-24 44-10q12 20-2 46h-76z" fill="#3a3a3a"/><path d="M668 160h22v30h-22zM706 168q14-8 24 4v28h-24z" fill="#d8d8d8"/><circle cx="672" cy="134" r="10" fill="#555"/><path d="M160 380l42-78l42 78z" fill="#cdeaf6"/><rect x="186" y="345" width="32" height="46" rx="4" fill="#b5563e"/><rect x="190" y="328" width="24" height="20" rx="3" fill="#3b7fb8"/><rect x="196" y="318" width="12" height="12" fill="#e8d2b0"/><rect x="295" y="300" width="140" height="97" fill="#4a5a3a"/><rect x="295" y="300" width="46" height="60" fill="#8a8a8a"/><rect x="295" y="356" width="60" height="41" fill="#2c4fa0"/><path d="M330 372q30-6 52-30l14 6q-20 34-60 38z" fill="#e6c0a6"/><rect x="370" y="306" width="20" height="60" fill="#6a6a6a"/><path d="M395 318h34M395 330h34M395 342h34" stroke="#9aa88a" stroke-width="3"/><rect x="480" y="318" width="128" height="79" fill="#5a5a5a"/><rect x="518" y="322" width="46" height="70" fill="#3c3c3c"/><path d="M524 338h34M530 372h24" stroke="#8a8a8a" stroke-width="4"/><rect x="480" y="318" width="30" height="79" fill="#6c6c6c"/><rect x="645" y="312" width="132" height="88" fill="#e3e8ec"/><path d="M680 382v-44l14 6l14-8l14 12l12-4l6 10v28z" fill="none" stroke="#d8262c" stroke-width="5"/><path d="M692 382v-22M706 382v-26M720 382v-18" stroke="#d8262c" stroke-width="5"/></svg>
<svg x="0" y="364" width="170" height="80" viewBox="0 0 1024 481.88"><circle cx="457" cy="246" r="143" fill="none" stroke="#333" stroke-width="5.5"/><path d="M330 330q60 90 240 30" fill="none" stroke="#d8d8d8" stroke-width="3" opacity="0.700"/><circle cx="457" cy="113" r="38" fill="#1f3864"/><circle cx="325" cy="222" r="38" fill="#4472c4"/><circle cx="590" cy="222" r="38" fill="#b4c7e7"/><circle cx="372" cy="365" r="38" fill="#44546a"/><circle cx="540" cy="368" r="38" fill="#3b3b3b"/><circle cx="457" cy="113" r="14" fill="none" stroke="#e8eef8" stroke-width="4"/><path d="M450 113h14M457 106v14" stroke="#e8eef8" stroke-width="3"/><rect x="308" y="212" width="26" height="18" rx="3" fill="none" stroke="#dfe8f8" stroke-width="3"/><path d="M336 220h10" stroke="#dfe8f8" stroke-width="3"/><path d="M576 240l4-26l10-12l10 12l4 26z" fill="#eef3fb"/><rect x="356" y="350" width="30" height="24" fill="none" stroke="#dfe4ee" stroke-width="4"/><path d="M371 350v24" stroke="#dfe4ee" stroke-width="3"/><rect x="524" y="362" width="12" height="22" fill="#d8d8d8"/><rect x="540" y="350" width="12" height="34" fill="#d8d8d8"/><path d="M548 338l10 10" stroke="#d8d8d8" stroke-width="4"/><g fill="none" stroke="#111" stroke-width="6.500" stroke-linejoin="round"><path d="M457 228q-12-8-24-4v28q12-4 24 4q12-8 24-4v-28q-12-4-24 4zM457 228v28"/></g><path d="M457 196v12M440 202l5 10M474 202l-5 10M430 216l8 4M484 216l-8 4" stroke="#444" stroke-width="2.400" fill="none"/><text stroke="#3a3a3a" stroke-width="0.5" x="405" y="281.33" font-size="15.68" fill="#3a3a3a" textLength="104" lengthAdjust="spacingAndGlyphs" font-weight="700">EDUCACIÓN</text><text stroke="#3a3a3a" stroke-width="0.5" x="404" y="302.33" font-size="15.68" fill="#3a3a3a" textLength="106" lengthAdjust="spacingAndGlyphs" font-weight="700">FINANCIERA</text><text stroke="#3c3c3c" stroke-width="0.1" x="345" y="77.33" font-size="15.68" fill="#3c3c3c" textLength="130" lengthAdjust="spacingAndGlyphs" font-weight="700">CUMPLIR LA FIRMA</text><text stroke="#3c3c3c" stroke-width="0.1" x="345" y="92.33" font-size="15.68" fill="#3c3c3c" textLength="75" lengthAdjust="spacingAndGlyphs" font-weight="700">DE BRAZOS</text><text stroke="#3c3c3c" stroke-width="0.1" x="170" y="221.33" font-size="15.68" fill="#3c3c3c" textLength="105" lengthAdjust="spacingAndGlyphs" font-weight="700">IMPLEMENTAR</text><text stroke="#3c3c3c" stroke-width="0.1" x="183" y="238.33" font-size="15.68" fill="#3c3c3c" textLength="92" lengthAdjust="spacingAndGlyphs" font-weight="700">Y EVALUAR</text><text stroke="#3c3c3c" stroke-width="0.1" x="635" y="221.33" font-size="15.68" fill="#3c3c3c" textLength="110" lengthAdjust="spacingAndGlyphs" font-weight="700">TOMAR MEJORES</text><text stroke="#3c3c3c" stroke-width="0.1" x="635" y="237.33" font-size="15.68" fill="#3c3c3c" textLength="77" lengthAdjust="spacingAndGlyphs" font-weight="700">DECISIONES</text><text stroke="#3c3c3c" stroke-width="0.1" x="200" y="367.33" font-size="15.68" fill="#3c3c3c" textLength="125" lengthAdjust="spacingAndGlyphs" font-weight="700">IDENTIFICAR LAS</text><text stroke="#3c3c3c" stroke-width="0.1" x="240" y="383.33" font-size="15.68" fill="#3c3c3c" textLength="85" lengthAdjust="spacingAndGlyphs" font-weight="700">OPCIONES</text><text stroke="#3c3c3c" stroke-width="0.1" x="590" y="376.33" font-size="15.68" fill="#3c3c3c" textLength="65" lengthAdjust="spacingAndGlyphs" font-weight="700">OBTENER</text><text stroke="#3c3c3c" stroke-width="0.1" x="590" y="392.33" font-size="15.68" fill="#3c3c3c" textLength="115" lengthAdjust="spacingAndGlyphs" font-weight="700">ORGANIZACIÓN</text></svg>
<svg x="19.1" y="450.3" width="113.8" height="64.4" viewBox="249.4 119.25 677.6 381.75" preserveAspectRatio="none"><rect x="420" y="149.7" width="106.6" height="12.1" fill="#f3f8fd"/>
<text x="438" y="158.78" font-size="8.5" fill="#e4edf7" textLength="58" lengthAdjust="spacingAndGlyphs" opacity="0.6">Rectangular Snip</text>
<path d="M-20.65 -5.25 L8.45 -5.25 L8.45 -11.75 L20.65 0 L8.45 11.75 L8.45 5.25 L-20.65 5.25Z" fill="#000" transform="translate(365.4 217.4) rotate(-35.2)"/>
<path d="M-20.65 -5.25 L8.45 -5.25 L8.45 -11.75 L20.65 0 L8.45 11.75 L8.45 5.25 L-20.65 5.25Z" fill="#000" transform="translate(376.7 270.3) rotate(0)"/>
<path d="M-20.65 -5.25 L8.45 -5.25 L8.45 -11.75 L20.65 0 L8.45 11.75 L8.45 5.25 L-20.65 5.25Z" fill="#000" transform="translate(373.7 323.7) rotate(24.5)"/>
<path d="M-20.65 -5.25 L8.45 -5.25 L8.45 -11.75 L20.65 0 L8.45 11.75 L8.45 5.25 L-20.65 5.25Z" fill="#000" transform="translate(350.5 376.8) rotate(40.2)"/>
<path d="M-20.65 -5.25 L8.45 -5.25 L8.45 -11.75 L20.65 0 L8.45 11.75 L8.45 5.25 L-20.65 5.25Z" fill="#000" transform="translate(526.1 164.4) rotate(0)"/>
<path d="M-20.65 -5.25 L8.45 -5.25 L8.45 -11.75 L20.65 0 L8.45 11.75 L8.45 5.25 L-20.65 5.25Z" fill="#000" transform="translate(556.4 268.9) rotate(0)"/>
<path d="M-20.65 -5.25 L8.45 -5.25 L8.45 -11.75 L20.65 0 L8.45 11.75 L8.45 5.25 L-20.65 5.25Z" fill="#000" transform="translate(728.1 268.3) rotate(0)"/>
<path d="M-20.65 -5.25 L8.45 -5.25 L8.45 -11.75 L20.65 0 L8.45 11.75 L8.45 5.25 L-20.65 5.25Z" fill="#000" transform="translate(486.6 450.4) rotate(0)"/>
<g stroke="#000" fill="none" stroke-linecap="round"><path d="M287.300 228.600H324.500M287.300 252.300H324.500" stroke-width="2.800"/><path d="M289.700 228.600V252.300M322.700 228.600V252.300" stroke-width="2.800" stroke-linecap="butt"/><path d="M305.900 226V228M305.900 252.300V263.600M305.900 253.600L295.800 262.400M305.900 253.600L316.200 262.400" stroke-width="2.200"/><path d="M297.200 236.900H304.400M297.200 243.800H304.400" stroke-width="1.800"/><path d="M309.600 236.800l2 1.900l4.200-4M309.600 243.700l2 1.900l4.200-4" stroke-width="1.700" stroke-linejoin="round"/></g>
<text stroke="#111" stroke-width="0.28" x="284.6" y="282.11" font-size="10.3" fill="#111" textLength="44" lengthAdjust="spacingAndGlyphs" font-weight="700" opacity="0.6">CUMPLIR</text>
<text stroke="#111" stroke-width="0.28" x="296.9" y="294.21" font-size="10.3" fill="#111" textLength="18.5" lengthAdjust="spacingAndGlyphs" font-weight="700" opacity="0.6">LOS</text>
<text stroke="#111" stroke-width="0.28" x="278.7" y="306.11" font-size="10.3" fill="#111" textLength="55.6" lengthAdjust="spacingAndGlyphs" font-weight="700" opacity="0.6">OBJETIVOS</text>
<g fill="#000"><rect x="424.8" y="183.4" width="46.8" height="2.1"/><path d="M428.3 170.2L446.8 151.4L458.6 163.4L457.2 165.4L446.8 155.2L430.2 172.2Z"/><path d="M432.6 170.6L446.8 156.6L460.2 169.8V183.6H432.6Z"/><path d="M463.6 149.4C466.6 153.6 470 159 470 165.4C470 170 467.2 172.8 463.9 172.8C460.4 172.8 457.7 170 457.7 165.4C457.7 159 460.8 153.600 463.6 149.4Z"/><rect x="462.5" y="165" width="2.2" height="19"/><path d="M463.6 176l-3.6-4.2" stroke="#000" stroke-width="1.2"/><rect x="453.6" y="154" width="3" height="6"/><rect x="427.9" y="178.6" width="1.1" height="5"/><circle cx="428.4" cy="177.2" r="1.9"/></g><g fill="#fff"><rect x="436.6" y="172.2" width="4.8" height="4.6"/><rect x="444.6" y="172.2" width="4.6" height="10.6"/><rect x="452.2" y="172.2" width="4.8" height="4.6"/><rect x="460.6" y="165.5" width="1.2" height="18" /></g>
<text stroke="#1472c4" stroke-width="0.28" x="400" y="198.11" font-size="10.3" fill="#1472c4" textLength="94.5" lengthAdjust="spacingAndGlyphs" font-weight="700" opacity="0.6">ADQUIRIR ACTIVOS</text>
<text stroke="#1472c4" stroke-width="0.28" x="412.9" y="209.71" font-size="10.3" fill="#1472c4" textLength="71.4" lengthAdjust="spacingAndGlyphs" font-weight="700" opacity="0.6">PRODUCTIVOS</text>
<g stroke="#1c1c1c" fill="none" stroke-width="0.95" stroke-linejoin="round" stroke-linecap="round"><path d="M576.1 129.8L586.6 140.8L585.6 142.2L579.8 148.4M576.1 145.5L579.8 148.4"/><path d="M585.6 142.2L593.4 146.7L596.7 157.5M579.8 148.4L585.2 155L595.9 158.3"/><path d="M589.3 151L596.2 157.8"/><path d="M596 158L601.3 158.3L601.9 155.6L605.8 158.7L607.9 154.8L611.2 158.3"/><path d="M616.1 150.4C614.8 149.4 613.4 149 612 149.2C610.4 149.6 609.9 150.6 609.9 151.7C609.8 153.4 610 155.4 610.2 156.6L613.2 160.8"/></g><circle cx="589.3" cy="151" r="0.9" fill="#1c1c1c"/><path d="M594.6 156.2L596.9 158.4L594 157.6Z" fill="#1c1c1c"/>
<text stroke="#111" stroke-width="0.28" x="568.8" y="177.01" font-size="10.3" fill="#111" textLength="54.9" lengthAdjust="spacingAndGlyphs" font-weight="700" opacity="0.6">MANTENER</text>
<text stroke="#111" stroke-width="0.28" x="558.9" y="188.91" font-size="10.3" fill="#111" textLength="74.9" lengthAdjust="spacingAndGlyphs" font-weight="700" opacity="0.6">EL FUNCIONAM</text>
<text stroke="#111" stroke-width="0.28" x="565.3" y="201.11" font-size="10.3" fill="#111" textLength="61.7" lengthAdjust="spacingAndGlyphs" font-weight="700" opacity="0.6">IENTO DE LA</text>
<text stroke="#111" stroke-width="0.28" x="576.6" y="213.11" font-size="10.3" fill="#111" textLength="38.9" lengthAdjust="spacingAndGlyphs" font-weight="700" opacity="0.6">FAMILIA</text>
<g stroke="#1a1a1a" fill="none" stroke-width="1.25"><rect x="463.4" y="240" width="35.4" height="35" rx="2.4"/><rect x="468.2" y="244.4" width="27" height="25.8" rx="0.6"/><circle cx="476.5" cy="257.3" r="5.3"/><path d="M476.5 254.3l0.9 2.1l2.1 0.9l-2.1 0.9l-0.9 2.1l-0.9-2.1l-2.1-0.9l2.1-0.9z" stroke-width="0.7"/><path d="M490.5 252.2V262.9"/><rect x="468.2" y="275" width="3.8" height="3"/><rect x="490.8" y="275" width="3.8" height="3"/></g>
<text stroke="#1472c4" stroke-width="0.28" x="435.7" y="296.51" font-size="10.3" fill="#1472c4" textLength="90.5" lengthAdjust="spacingAndGlyphs" font-weight="700" opacity="0.6">GUARDAR DINERO</text>
<text stroke="#1472c4" stroke-width="0.28" x="437.1" y="308.61" font-size="10.3" fill="#1472c4" textLength="85.7" lengthAdjust="spacingAndGlyphs" font-weight="700" opacity="0.6">PARA OBJETIVOS</text>
<text stroke="#1472c4" stroke-width="0.28" x="457.7" y="320.71" font-size="10.3" fill="#1472c4" textLength="46.9" lengthAdjust="spacingAndGlyphs" font-weight="700" opacity="0.6">FUTUROS</text>
<g stroke="#000" fill="none"><rect x="629.6" y="240.7" width="29.6" height="32.5" stroke-width="2.7"/><path d="M626.4 243.7h2.4M626.4 248.9h2.4M626.4 254.2h2.4M626.4 259.5h2.4M626.4 264.7h2.4M626.4 269.8h2.4" stroke-width="1.9" stroke-linecap="round"/><g stroke-width="1.55" stroke-linecap="round" stroke-linejoin="round"><path d="M634.9 246.4l6.800 6.400M641.700 246.400l-6.800 6.400"/><path d="M646.650 261.100l6.800 6.400M653.450 261.100l-6.800 6.400"/><circle cx="638.3" cy="264.3" r="3.3"/><path d="M650.05 246.800V254.600Q650.05 256.500 648.200 256.500H640.400Q638.300 256.500 638.300 258.600V260.800"/><path d="M646.600 249.500L650.050 246.300L653.500 249.500"/></g></g>
<text stroke="#111" stroke-width="0.28" x="603.7" y="288.31" font-size="10.3" fill="#111" textLength="80" lengthAdjust="spacingAndGlyphs" font-weight="700" opacity="0.6">PRESUPUESTAR</text>
<text stroke="#111" stroke-width="0.28" x="611.8" y="300.11" font-size="10.3" fill="#111" textLength="63.9" lengthAdjust="spacingAndGlyphs" font-weight="700" opacity="0.6">LOS GASTOS</text>
<g stroke="#000" fill="none"><rect x="785.7" y="232.1" width="25.3" height="32.8" rx="1.2" stroke-width="2.2"/><path d="M786 238.1H811" stroke-width="1.1"/><ellipse cx="791.6" cy="238.1" rx="1.9" ry="2.3" fill="#000" stroke="none"/><ellipse cx="801.1" cy="238.1" rx="1.9" ry="2.3" fill="#000" stroke="none"/><ellipse cx="805.5" cy="238.1" rx="1.9" ry="2.3" fill="#000" stroke="none"/><path d="M786 245.1H811" stroke-width="1.1"/><ellipse cx="797.6" cy="245.1" rx="1.9" ry="2.3" fill="#000" stroke="none"/><ellipse cx="801.5" cy="245.1" rx="1.9" ry="2.3" fill="#000" stroke="none"/><ellipse cx="805.9" cy="245.1" rx="1.9" ry="2.3" fill="#000" stroke="none"/><path d="M786 251.9H811" stroke-width="1.1"/><ellipse cx="791.6" cy="251.9" rx="1.9" ry="2.3" fill="#000" stroke="none"/><ellipse cx="796" cy="251.9" rx="1.9" ry="2.3" fill="#000" stroke="none"/><ellipse cx="805.5" cy="251.9" rx="1.9" ry="2.3" fill="#000" stroke="none"/><path d="M786 259.4H811" stroke-width="1.1"/><ellipse cx="791.6" cy="259.4" rx="1.9" ry="2.3" fill="#000" stroke="none"/><ellipse cx="801.5" cy="259.4" rx="1.9" ry="2.3" fill="#000" stroke="none"/><ellipse cx="805.9" cy="259.4" rx="1.9" ry="2.3" fill="#000" stroke="none"/></g>
<text stroke="#111" stroke-width="0.28" x="775.2" y="280.61" font-size="10.3" fill="#111" textLength="43.9" lengthAdjust="spacingAndGlyphs" font-weight="700" opacity="0.6">UTILIZAR</text>
<text stroke="#111" stroke-width="0.28" x="758.2" y="292.11" font-size="10.3" fill="#111" textLength="78.5" lengthAdjust="spacingAndGlyphs" font-weight="700" opacity="0.6">HERRAMIENTAS</text>
<text stroke="#111" stroke-width="0.28" x="770.1" y="304.51" font-size="10.3" fill="#111" textLength="54.5" lengthAdjust="spacingAndGlyphs" font-weight="700" opacity="0.6">(CONTROL)</text>
<circle cx="843.5" cy="310.9" r="16" fill="#fff" stroke="#f2f2f2" stroke-width="0.6"/>
<circle cx="843.5" cy="310.9" r="14" fill="#1fcdc5"/>
<path d="M835 303.6h13.600a1.500 1.500 0 0 1 1.500 1.500v12.400a1.500 1.500 0 0 1 -1.500 1.500h-13.600z" fill="#fff"/><rect x="835" y="301.7" width="15" height="2.500" rx="1" fill="#e6fbf9"/>
<text x="842.3" y="314.75" font-size="11" fill="#e8305c" text-anchor="middle" font-weight="700">$</text>
<path d="M845.600 320.400l1.200-3.600l6.400-6.200l2.600 2.600l-6.400 6.200z" fill="#e8305c"/><path d="M845.600 320.400l1.200-3.600l2.400 2.400z" fill="#fff"/><path d="M853.800 310l1.300-1.300a1.100 1.100 0 0 1 1.500 0l1.100 1.100a1.100 1.100 0 0 1 0 1.500l-1.300 1.300z" fill="#fff"/>
<g stroke="#000" fill="none"><rect x="463" y="365.4" width="35.8" height="3.6" fill="#000" stroke="none"/><rect x="466.4" y="362" width="29.5" height="3.8" fill="#000" stroke="none"/><path d="M470.3 363L472.200 345.200Q472.400 343.500 474.200 343.500H487.200Q489 343.500 489.200 345.200L491.400 363" stroke-width="2.7"/><path d="M484.5 347L486 359.6" stroke-width="1.5"/><path d="M480.7 333.2V338.5M465.500 335.400L470 339.800M496 335.400L491.600 339.800M463.200 348.500H467.700M493.700 348.500H498.400" stroke-width="1.9"/></g>
<text stroke="#1472c4" stroke-width="0.28" x="452.1" y="381.01" font-size="10.3" fill="#1472c4" textLength="58.2" lengthAdjust="spacingAndGlyphs" font-weight="700" opacity="0.6">CONSTRUIR</text>
<text stroke="#1472c4" stroke-width="0.28" x="454.8" y="392.61" font-size="10.3" fill="#1472c4" textLength="52.2" lengthAdjust="spacingAndGlyphs" font-weight="700" opacity="0.6">UN FONDO</text>
<text stroke="#1472c4" stroke-width="0.28" x="439.8" y="404.71" font-size="10.3" fill="#1472c4" textLength="82.5" lengthAdjust="spacingAndGlyphs" font-weight="700" opacity="0.6">DE EMERGENCIA</text>
<text stroke="#1472c4" stroke-width="0.28" x="453.9" y="416.51" font-size="10.3" fill="#1472c4" textLength="56.8" lengthAdjust="spacingAndGlyphs" font-weight="700" opacity="0.6">ADECUADO</text>
<g stroke="#1a1a1a" fill="none" stroke-width="1.1" stroke-linejoin="round" stroke-linecap="round"><path d="M 401.31 396.16 L 417.22 407.45 C 411.06 413.61 405.93 420.79 404.39 427.98 C 403.36 433.11 400.79 437.22 396.89 440.3 L 382.32 427.47 C 387.45 421.82 389.5 415.66 391.04 409.5 C 392.58 404.37 396.69 399.75 401.31 396.16 Z"/><path d="M 400.59 400.57 L 409.52 406.42 Q 411.06 407.66 409.83 409.09 C 405.41 414.64 403.36 420.79 401.62 428.19 C 400.59 432.09 399.25 434.34 397.51 435.58 Q 396.28 436.4 395.05 435.37 L 387.66 429.01 Q 386.42 427.77 387.45 426.44 C 391.04 421.31 392.07 416.18 393.61 410.53 C 394.84 405.91 397.51 402.83 400.59 400.57 Z"/><ellipse cx="397.9" cy="416.500" rx="3.700" ry="3" transform="rotate(30 397.900 416.500)"/><circle cx="403.05" cy="407.65" r="1.200"/><circle cx="394.400" cy="426.950" r="1.200"/><path d="M 390.53 408.68 C 387.45 404.37 382.32 403.34 377.39 401.09 C 376.98 404.37 378.21 406.94 380.06 408.27 C 380.06 410.02 381.29 411.56 383.14 412.07 C 383.34 413.81 384.88 415.15 387.24 415.15 C 387.24 416.18 387.66 417.51 388.27 418.33"/><path d="M 407.77 419.46 C 411.06 416.69 415.17 417.72 418.24 421.82 C 420.3 424.9 422.86 426.44 425.43 426.95 C 424.4 429.52 421.32 431.06 418.24 429.52 C 417.73 431.06 415.68 432.09 413.63 430.55 C 412.6 431.57 410.55 431.57 409.01 429.52 C 407.47 429.52 405.93 427.98 405.41 425.41"/></g>
<text stroke="#1472c4" stroke-width="0.28" x="383.7" y="455.51" font-size="10.3" fill="#1472c4" textLength="34.9" lengthAdjust="spacingAndGlyphs" font-weight="700" opacity="0.6">EVITAR</text>
<text stroke="#1472c4" stroke-width="0.28" x="365.8" y="467.61" font-size="10.3" fill="#1472c4" textLength="70.9" lengthAdjust="spacingAndGlyphs" font-weight="700" opacity="0.6">EL PROBLEMA</text>
<text stroke="#1472c4" stroke-width="0.28" x="362.2" y="479.71" font-size="10.3" fill="#1472c4" textLength="77.9" lengthAdjust="spacingAndGlyphs" font-weight="700" opacity="0.6">DE LA LIQUIDEZ</text>
<g fill="#000"><path fill-rule="evenodd" d="M557.1 406.7H606.1V437.7H557.1ZM559.9 409.5V434.9H603.3V409.5Z"/><rect x="574.5" y="437.5" width="2.5" height="3.4"/><rect x="586" y="437.5" width="2.6" height="3.4"/><rect x="563.4" y="440.4" width="36" height="2.4"/></g>
<text stroke="#111" stroke-width="0.28" x="541.6" y="455.81" font-size="10.3" fill="#111" textLength="79.6" lengthAdjust="spacingAndGlyphs" font-weight="700" opacity="0.6">AHORRAR PARA</text>
<text stroke="#111" stroke-width="0.28" x="556.1" y="467.91" font-size="10.3" fill="#111" textLength="50" lengthAdjust="spacingAndGlyphs" font-weight="700" opacity="0.6">COMPRAS</text>
<text stroke="#111" stroke-width="0.28" x="558.2" y="480.01" font-size="10.3" fill="#111" textLength="46.5" lengthAdjust="spacingAndGlyphs" font-weight="700" opacity="0.6">FUTURAS</text></svg>
</g>
<g id="slide-content"><rect x="420" y="149.7" width="106.6" height="12.1" fill="#f3f8fd"/>
<text x="438" y="158.78" font-size="8.5" fill="#e4edf7" textLength="58" lengthAdjust="spacingAndGlyphs">Rectangular Snip</text>
<path d="M-20.65 -5.25 L8.45 -5.25 L8.45 -11.75 L20.65 0 L8.45 11.75 L8.45 5.25 L-20.65 5.25Z" fill="#000" transform="translate(365.4 217.4) rotate(-35.2)"/>
<path d="M-20.65 -5.25 L8.45 -5.25 L8.45 -11.75 L20.65 0 L8.45 11.75 L8.45 5.25 L-20.65 5.25Z" fill="#000" transform="translate(376.7 270.3) rotate(0)"/>
<path d="M-20.65 -5.25 L8.45 -5.25 L8.45 -11.75 L20.65 0 L8.45 11.75 L8.45 5.25 L-20.65 5.25Z" fill="#000" transform="translate(373.7 323.7) rotate(24.5)"/>
<path d="M-20.65 -5.25 L8.45 -5.25 L8.45 -11.75 L20.65 0 L8.45 11.75 L8.45 5.25 L-20.65 5.25Z" fill="#000" transform="translate(350.5 376.8) rotate(40.2)"/>
<path d="M-20.65 -5.25 L8.45 -5.25 L8.45 -11.75 L20.65 0 L8.45 11.75 L8.45 5.25 L-20.65 5.25Z" fill="#000" transform="translate(526.1 164.4) rotate(0)"/>
<path d="M-20.65 -5.25 L8.45 -5.25 L8.45 -11.75 L20.65 0 L8.45 11.75 L8.45 5.25 L-20.65 5.25Z" fill="#000" transform="translate(556.4 268.9) rotate(0)"/>
<path d="M-20.65 -5.25 L8.45 -5.25 L8.45 -11.75 L20.65 0 L8.45 11.75 L8.45 5.25 L-20.65 5.25Z" fill="#000" transform="translate(728.1 268.3) rotate(0)"/>
<path d="M-20.65 -5.25 L8.45 -5.25 L8.45 -11.75 L20.65 0 L8.45 11.75 L8.45 5.25 L-20.65 5.25Z" fill="#000" transform="translate(486.6 450.4) rotate(0)"/>
<g stroke="#000" fill="none" stroke-linecap="round"><path d="M287.300 228.600H324.500M287.300 252.300H324.500" stroke-width="2.800"/><path d="M289.700 228.600V252.300M322.700 228.600V252.300" stroke-width="2.800" stroke-linecap="butt"/><path d="M305.900 226V228M305.900 252.300V263.600M305.900 253.600L295.800 262.400M305.900 253.600L316.200 262.400" stroke-width="2.200"/><path d="M297.200 236.900H304.400M297.200 243.800H304.400" stroke-width="1.800"/><path d="M309.600 236.800l2 1.900l4.200-4M309.600 243.700l2 1.900l4.200-4" stroke-width="1.700" stroke-linejoin="round"/></g>
<text stroke="#111" stroke-width="0.28" x="284.6" y="282.11" font-size="10.3" fill="#111" textLength="44" lengthAdjust="spacingAndGlyphs" font-weight="700">CUMPLIR</text>
<text stroke="#111" stroke-width="0.28" x="296.9" y="294.21" font-size="10.3" fill="#111" textLength="18.5" lengthAdjust="spacingAndGlyphs" font-weight="700">LOS</text>
<text stroke="#111" stroke-width="0.28" x="278.7" y="306.11" font-size="10.3" fill="#111" textLength="55.6" lengthAdjust="spacingAndGlyphs" font-weight="700">OBJETIVOS</text>
<g fill="#000"><rect x="424.8" y="183.4" width="46.8" height="2.1"/><path d="M428.3 170.2L446.8 151.4L458.6 163.4L457.2 165.4L446.8 155.2L430.2 172.2Z"/><path d="M432.6 170.6L446.8 156.6L460.2 169.8V183.6H432.6Z"/><path d="M463.6 149.4C466.6 153.6 470 159 470 165.4C470 170 467.2 172.8 463.9 172.8C460.4 172.8 457.7 170 457.7 165.4C457.7 159 460.8 153.600 463.6 149.4Z"/><rect x="462.5" y="165" width="2.2" height="19"/><path d="M463.6 176l-3.6-4.2" stroke="#000" stroke-width="1.2"/><rect x="453.6" y="154" width="3" height="6"/><rect x="427.9" y="178.6" width="1.1" height="5"/><circle cx="428.4" cy="177.2" r="1.9"/></g><g fill="#fff"><rect x="436.6" y="172.2" width="4.8" height="4.6"/><rect x="444.6" y="172.2" width="4.6" height="10.6"/><rect x="452.2" y="172.2" width="4.8" height="4.6"/><rect x="460.6" y="165.5" width="1.2" height="18" /></g>
<text stroke="#1472c4" stroke-width="0.28" x="400" y="198.11" font-size="10.3" fill="#1472c4" textLength="94.5" lengthAdjust="spacingAndGlyphs" font-weight="700">ADQUIRIR ACTIVOS</text>
<text stroke="#1472c4" stroke-width="0.28" x="412.9" y="209.71" font-size="10.3" fill="#1472c4" textLength="71.4" lengthAdjust="spacingAndGlyphs" font-weight="700">PRODUCTIVOS</text>
<g stroke="#1c1c1c" fill="none" stroke-width="0.95" stroke-linejoin="round" stroke-linecap="round"><path d="M576.1 129.8L586.6 140.8L585.6 142.2L579.8 148.4M576.1 145.5L579.8 148.4"/><path d="M585.6 142.2L593.4 146.7L596.7 157.5M579.8 148.4L585.2 155L595.9 158.3"/><path d="M589.3 151L596.2 157.8"/><path d="M596 158L601.3 158.3L601.9 155.6L605.8 158.7L607.9 154.8L611.2 158.3"/><path d="M616.1 150.4C614.8 149.4 613.4 149 612 149.2C610.4 149.6 609.9 150.6 609.9 151.7C609.8 153.4 610 155.4 610.2 156.6L613.2 160.8"/></g><circle cx="589.3" cy="151" r="0.9" fill="#1c1c1c"/><path d="M594.6 156.2L596.9 158.4L594 157.6Z" fill="#1c1c1c"/>
<text stroke="#111" stroke-width="0.28" x="568.8" y="177.01" font-size="10.3" fill="#111" textLength="54.9" lengthAdjust="spacingAndGlyphs" font-weight="700">MANTENER</text>
<text stroke="#111" stroke-width="0.28" x="558.9" y="188.91" font-size="10.3" fill="#111" textLength="74.9" lengthAdjust="spacingAndGlyphs" font-weight="700">EL FUNCIONAM</text>
<text stroke="#111" stroke-width="0.28" x="565.3" y="201.11" font-size="10.3" fill="#111" textLength="61.7" lengthAdjust="spacingAndGlyphs" font-weight="700">IENTO DE LA</text>
<text stroke="#111" stroke-width="0.28" x="576.6" y="213.11" font-size="10.3" fill="#111" textLength="38.9" lengthAdjust="spacingAndGlyphs" font-weight="700">FAMILIA</text>
<g stroke="#1a1a1a" fill="none" stroke-width="1.25"><rect x="463.4" y="240" width="35.4" height="35" rx="2.4"/><rect x="468.2" y="244.4" width="27" height="25.8" rx="0.6"/><circle cx="476.5" cy="257.3" r="5.3"/><path d="M476.5 254.3l0.9 2.1l2.1 0.9l-2.1 0.9l-0.9 2.1l-0.9-2.1l-2.1-0.9l2.1-0.9z" stroke-width="0.7"/><path d="M490.5 252.2V262.9"/><rect x="468.2" y="275" width="3.8" height="3"/><rect x="490.8" y="275" width="3.8" height="3"/></g>
<text stroke="#1472c4" stroke-width="0.28" x="435.7" y="296.51" font-size="10.3" fill="#1472c4" textLength="90.5" lengthAdjust="spacingAndGlyphs" font-weight="700">GUARDAR DINERO</text>
<text stroke="#1472c4" stroke-width="0.28" x="437.1" y="308.61" font-size="10.3" fill="#1472c4" textLength="85.7" lengthAdjust="spacingAndGlyphs" font-weight="700">PARA OBJETIVOS</text>
<text stroke="#1472c4" stroke-width="0.28" x="457.7" y="320.71" font-size="10.3" fill="#1472c4" textLength="46.9" lengthAdjust="spacingAndGlyphs" font-weight="700">FUTUROS</text>
<g stroke="#000" fill="none"><rect x="629.6" y="240.7" width="29.6" height="32.5" stroke-width="2.7"/><path d="M626.4 243.7h2.4M626.4 248.9h2.4M626.4 254.2h2.4M626.4 259.5h2.4M626.4 264.7h2.4M626.4 269.8h2.4" stroke-width="1.9" stroke-linecap="round"/><g stroke-width="1.55" stroke-linecap="round" stroke-linejoin="round"><path d="M634.9 246.4l6.800 6.400M641.700 246.400l-6.800 6.400"/><path d="M646.650 261.100l6.800 6.400M653.450 261.100l-6.800 6.400"/><circle cx="638.3" cy="264.3" r="3.3"/><path d="M650.05 246.800V254.600Q650.05 256.500 648.200 256.500H640.400Q638.300 256.500 638.300 258.600V260.800"/><path d="M646.600 249.500L650.050 246.300L653.500 249.500"/></g></g>
<text stroke="#111" stroke-width="0.28" x="603.7" y="288.31" font-size="10.3" fill="#111" textLength="80" lengthAdjust="spacingAndGlyphs" font-weight="700">PRESUPUESTAR</text>
<text stroke="#111" stroke-width="0.28" x="611.8" y="300.11" font-size="10.3" fill="#111" textLength="63.9" lengthAdjust="spacingAndGlyphs" font-weight="700">LOS GASTOS</text>
<g stroke="#000" fill="none"><rect x="785.7" y="232.1" width="25.3" height="32.8" rx="1.2" stroke-width="2.2"/><path d="M786 238.1H811" stroke-width="1.1"/><ellipse cx="791.6" cy="238.1" rx="1.9" ry="2.3" fill="#000" stroke="none"/><ellipse cx="801.1" cy="238.1" rx="1.9" ry="2.3" fill="#000" stroke="none"/><ellipse cx="805.5" cy="238.1" rx="1.9" ry="2.3" fill="#000" stroke="none"/><path d="M786 245.1H811" stroke-width="1.1"/><ellipse cx="797.6" cy="245.1" rx="1.9" ry="2.3" fill="#000" stroke="none"/><ellipse cx="801.5" cy="245.1" rx="1.9" ry="2.3" fill="#000" stroke="none"/><ellipse cx="805.9" cy="245.1" rx="1.9" ry="2.3" fill="#000" stroke="none"/><path d="M786 251.9H811" stroke-width="1.1"/><ellipse cx="791.6" cy="251.9" rx="1.9" ry="2.3" fill="#000" stroke="none"/><ellipse cx="796" cy="251.9" rx="1.9" ry="2.3" fill="#000" stroke="none"/><ellipse cx="805.5" cy="251.9" rx="1.9" ry="2.3" fill="#000" stroke="none"/><path d="M786 259.4H811" stroke-width="1.1"/><ellipse cx="791.6" cy="259.4" rx="1.9" ry="2.3" fill="#000" stroke="none"/><ellipse cx="801.5" cy="259.4" rx="1.9" ry="2.3" fill="#000" stroke="none"/><ellipse cx="805.9" cy="259.4" rx="1.9" ry="2.3" fill="#000" stroke="none"/></g>
<text stroke="#111" stroke-width="0.28" x="775.2" y="280.61" font-size="10.3" fill="#111" textLength="43.9" lengthAdjust="spacingAndGlyphs" font-weight="700">UTILIZAR</text>
<text stroke="#111" stroke-width="0.28" x="758.2" y="292.11" font-size="10.3" fill="#111" textLength="78.5" lengthAdjust="spacingAndGlyphs" font-weight="700">HERRAMIENTAS</text>
<text stroke="#111" stroke-width="0.28" x="770.1" y="304.51" font-size="10.3" fill="#111" textLength="54.5" lengthAdjust="spacingAndGlyphs" font-weight="700">(CONTROL)</text>
<circle cx="843.5" cy="310.9" r="16" fill="#fff" stroke="#f2f2f2" stroke-width="0.6"/>
<circle cx="843.5" cy="310.9" r="14" fill="#1fcdc5"/>
<path d="M835 303.6h13.600a1.500 1.500 0 0 1 1.500 1.500v12.400a1.500 1.500 0 0 1 -1.500 1.500h-13.600z" fill="#fff"/><rect x="835" y="301.7" width="15" height="2.500" rx="1" fill="#e6fbf9"/>
<text x="842.3" y="314.75" font-size="11" fill="#e8305c" text-anchor="middle" font-weight="700">$</text>
<path d="M845.600 320.400l1.200-3.600l6.400-6.200l2.600 2.600l-6.400 6.200z" fill="#e8305c"/><path d="M845.600 320.400l1.200-3.600l2.400 2.400z" fill="#fff"/><path d="M853.800 310l1.300-1.300a1.100 1.100 0 0 1 1.500 0l1.100 1.100a1.100 1.100 0 0 1 0 1.500l-1.300 1.300z" fill="#fff"/>
<g stroke="#000" fill="none"><rect x="463" y="365.4" width="35.8" height="3.6" fill="#000" stroke="none"/><rect x="466.4" y="362" width="29.5" height="3.8" fill="#000" stroke="none"/><path d="M470.3 363L472.200 345.200Q472.400 343.500 474.200 343.500H487.200Q489 343.500 489.200 345.200L491.400 363" stroke-width="2.7"/><path d="M484.5 347L486 359.6" stroke-width="1.5"/><path d="M480.7 333.2V338.5M465.500 335.400L470 339.800M496 335.400L491.600 339.800M463.200 348.500H467.700M493.700 348.500H498.400" stroke-width="1.9"/></g>
<text stroke="#1472c4" stroke-width="0.28" x="452.1" y="381.01" font-size="10.3" fill="#1472c4" textLength="58.2" lengthAdjust="spacingAndGlyphs" font-weight="700">CONSTRUIR</text>
<text stroke="#1472c4" stroke-width="0.28" x="454.8" y="392.61" font-size="10.3" fill="#1472c4" textLength="52.2" lengthAdjust="spacingAndGlyphs" font-weight="700">UN FONDO</text>
<text stroke="#1472c4" stroke-width="0.28" x="439.8" y="404.71" font-size="10.3" fill="#1472c4" textLength="82.5" lengthAdjust="spacingAndGlyphs" font-weight="700">DE EMERGENCIA</text>
<text stroke="#1472c4" stroke-width="0.28" x="453.9" y="416.51" font-size="10.3" fill="#1472c4" textLength="56.8" lengthAdjust="spacingAndGlyphs" font-weight="700">ADECUADO</text>
<g stroke="#1a1a1a" fill="none" stroke-width="1.1" stroke-linejoin="round" stroke-linecap="round"><path d="M 401.31 396.16 L 417.22 407.45 C 411.06 413.61 405.93 420.79 404.39 427.98 C 403.36 433.11 400.79 437.22 396.89 440.3 L 382.32 427.47 C 387.45 421.82 389.5 415.66 391.04 409.5 C 392.58 404.37 396.69 399.75 401.31 396.16 Z"/><path d="M 400.59 400.57 L 409.52 406.42 Q 411.06 407.66 409.83 409.09 C 405.41 414.64 403.36 420.79 401.62 428.19 C 400.59 432.09 399.25 434.34 397.51 435.58 Q 396.28 436.4 395.05 435.37 L 387.66 429.01 Q 386.42 427.77 387.45 426.44 C 391.04 421.31 392.07 416.18 393.61 410.53 C 394.84 405.91 397.51 402.83 400.59 400.57 Z"/><ellipse cx="397.9" cy="416.500" rx="3.700" ry="3" transform="rotate(30 397.900 416.500)"/><circle cx="403.05" cy="407.65" r="1.200"/><circle cx="394.400" cy="426.950" r="1.200"/><path d="M 390.53 408.68 C 387.45 404.37 382.32 403.34 377.39 401.09 C 376.98 404.37 378.21 406.94 380.06 408.27 C 380.06 410.02 381.29 411.56 383.14 412.07 C 383.34 413.81 384.88 415.15 387.24 415.15 C 387.24 416.18 387.66 417.51 388.27 418.33"/><path d="M 407.77 419.46 C 411.06 416.69 415.17 417.72 418.24 421.82 C 420.3 424.9 422.86 426.44 425.43 426.95 C 424.4 429.52 421.32 431.06 418.24 429.52 C 417.73 431.06 415.68 432.09 413.63 430.55 C 412.6 431.57 410.55 431.57 409.01 429.52 C 407.47 429.52 405.93 427.98 405.41 425.41"/></g>
<text stroke="#1472c4" stroke-width="0.28" x="383.7" y="455.51" font-size="10.3" fill="#1472c4" textLength="34.9" lengthAdjust="spacingAndGlyphs" font-weight="700">EVITAR</text>
<text stroke="#1472c4" stroke-width="0.28" x="365.8" y="467.61" font-size="10.3" fill="#1472c4" textLength="70.9" lengthAdjust="spacingAndGlyphs" font-weight="700">EL PROBLEMA</text>
<text stroke="#1472c4" stroke-width="0.28" x="362.2" y="479.71" font-size="10.3" fill="#1472c4" textLength="77.9" lengthAdjust="spacingAndGlyphs" font-weight="700">DE LA LIQUIDEZ</text>
<g fill="#000"><path fill-rule="evenodd" d="M557.1 406.7H606.1V437.7H557.1ZM559.9 409.5V434.9H603.3V409.5Z"/><rect x="574.5" y="437.5" width="2.5" height="3.4"/><rect x="586" y="437.5" width="2.6" height="3.4"/><rect x="563.4" y="440.4" width="36" height="2.4"/></g>
<text stroke="#111" stroke-width="0.28" x="541.6" y="455.81" font-size="10.3" fill="#111" textLength="79.6" lengthAdjust="spacingAndGlyphs" font-weight="700">AHORRAR PARA</text>
<text stroke="#111" stroke-width="0.28" x="556.1" y="467.91" font-size="10.3" fill="#111" textLength="50" lengthAdjust="spacingAndGlyphs" font-weight="700">COMPRAS</text>
<text stroke="#111" stroke-width="0.28" x="558.2" y="480.01" font-size="10.3" fill="#111" textLength="46.5" lengthAdjust="spacingAndGlyphs" font-weight="700">FUTURAS</text></g>
<text x="165.8" y="523.5" font-size="10" fill="#c6c6c6" textLength="76.2" lengthAdjust="spacingAndGlyphs">Click to add notes</text>
<text x="1.3" y="543.19" font-size="7.4" fill="#d4d4d4" textLength="41.2" lengthAdjust="spacingAndGlyphs">Slide 10 of 18</text>
<g fill="none" stroke="#d0d0d0" stroke-width="0.800"><path d="M55.800 537.400h3.600v6.600h-3.600zM59.400 537.400h3.600v3.400M59.400 544h1.600"/><path d="M61.600 542l2.600 2.600M64.200 542l-2.600 2.600"/></g>
<text x="76.3" y="543.19" font-size="7.4" fill="#d4d4d4" textLength="68" lengthAdjust="spacingAndGlyphs">English (United States)</text>
<g fill="none" stroke="#d0d0d0" stroke-width="0.800"><circle cx="159.400" cy="537.600" r="1"/><path d="M155.600 539.400h7.600M159.400 539.400v2.400l-2.200 3M159.400 541.800l2.200 3"/></g>
<text x="166.3" y="543.19" font-size="7.4" fill="#d4d4d4" textLength="72" lengthAdjust="spacingAndGlyphs">Accessibility: Investigate</text>
<path d="M745 541.400h10.400M745 543.200h10.400M745 545h10.400M748 539l2.200-1.800l2.200 1.800" fill="none" stroke="#d0d0d0" stroke-width="0.800"/>
<text x="756.5" y="543.19" font-size="7.4" fill="#d4d4d4" textLength="18.3" lengthAdjust="spacingAndGlyphs">Notes</text>
<rect x="787.8" y="533.3" width="25.7" height="12.7" fill="#2c2c2c"/>
<g fill="none" stroke="#e0e0e0" stroke-width="0.900"><rect x="795.800" y="536.800" width="9.400" height="7.800"/><path d="M798.200 536.800v7.800M798.200 542h7"/><rect x="799.800" y="538.400" width="3.800" height="2"/></g>
<g fill="none" stroke="#d0d0d0" stroke-width="0.900"><rect x="822.200" y="537" width="3.400" height="2.800"/><rect x="828" y="537" width="3.400" height="2.800"/><rect x="822.200" y="541.800" width="3.400" height="2.800"/><rect x="828" y="541.800" width="3.400" height="2.800"/></g>
<g fill="none" stroke="#d0d0d0" stroke-width="0.900"><path d="M848 537.200h4.200l0.400 0.600v6.800l-0.400-0.600h-4.200zM857.200 537.200h-4.200l-0.400 0.600v6.800l0.400-0.600h4.200z"/><path d="M849.400 539h2M849.400 540.600h2M853.800 539h2M853.800 540.600h2" stroke-width="0.600"/></g>
<g fill="none" stroke="#d0d0d0" stroke-width="0.900"><path d="M874.400 536.800h9M875.200 536.800v4.600h7.400v-4.600M878.900 541.400v3M876.800 544.600h4.200"/></g><rect x="877.400" y="538.200" width="3" height="1.800" fill="#d0d0d0"/>
<line x1="896.2" y1="540.4" x2="900.8" y2="540.4" stroke="#c8c8c8" stroke-width="0.8" stroke-linecap="butt"/>
<line x1="904" y1="540.5" x2="969.8" y2="540.5" stroke="#5a5a5a" stroke-width="0.8" stroke-linecap="butt"/>
<line x1="936.7" y1="538.6" x2="936.7" y2="542.4" stroke="#5a5a5a" stroke-width="0.8" stroke-linecap="butt"/>
<rect x="928.9" y="536.8" width="3" height="7.4" fill="#b8b8b8" rx="0.5"/>
<path d="M973 540.400h5M975.500 537.900v5" stroke="#c8c8c8" stroke-width="0.800" fill="none"/>
<text x="985.8" y="543.19" font-size="7.4" fill="#d4d4d4" textLength="13" lengthAdjust="spacingAndGlyphs">81%</text>
<g fill="none" stroke="#d0d0d0" stroke-width="0.800"><rect x="1010.200" y="538.400" width="3.800" height="3.800"/><path d="M1007.400 540.300l1.600-1.600M1007.400 540.300l1.600 1.600M1016.800 540.300l-1.600-1.600M1016.800 540.300l-1.600 1.600M1012.100 535.600l-1.600 1.600M1012.100 535.600l1.600 1.600M1012.100 545l-1.600-1.600M1012.100 545l1.600-1.600"/></g>
<path d="M1019 119.200l3.500-3.800l3.500 3.800z" fill="#9a9a9a"/>
<path d="M1019 467.600l3.500 3.800l3.500-3.800z" fill="#9a9a9a"/>
<path d="M1019 479.800l3.500-3.600l3.500 3.600zM1019 483.600l3.500-3.600l3.500 3.600z" fill="#9a9a9a"/>
<path d="M1019 487l3.500 3.600l3.500-3.600zM1019 490.800l3.500 3.600l3.500-3.600z" fill="#9a9a9a"/>
<path d="M148.200 119.200l2.800-3.200l2.800 3.200z" fill="#9a9a9a"/>
<path d="M147.800 525.800l3 3.400l3-3.400z" fill="#9a9a9a"/>
</svg>
</body>
</html>
